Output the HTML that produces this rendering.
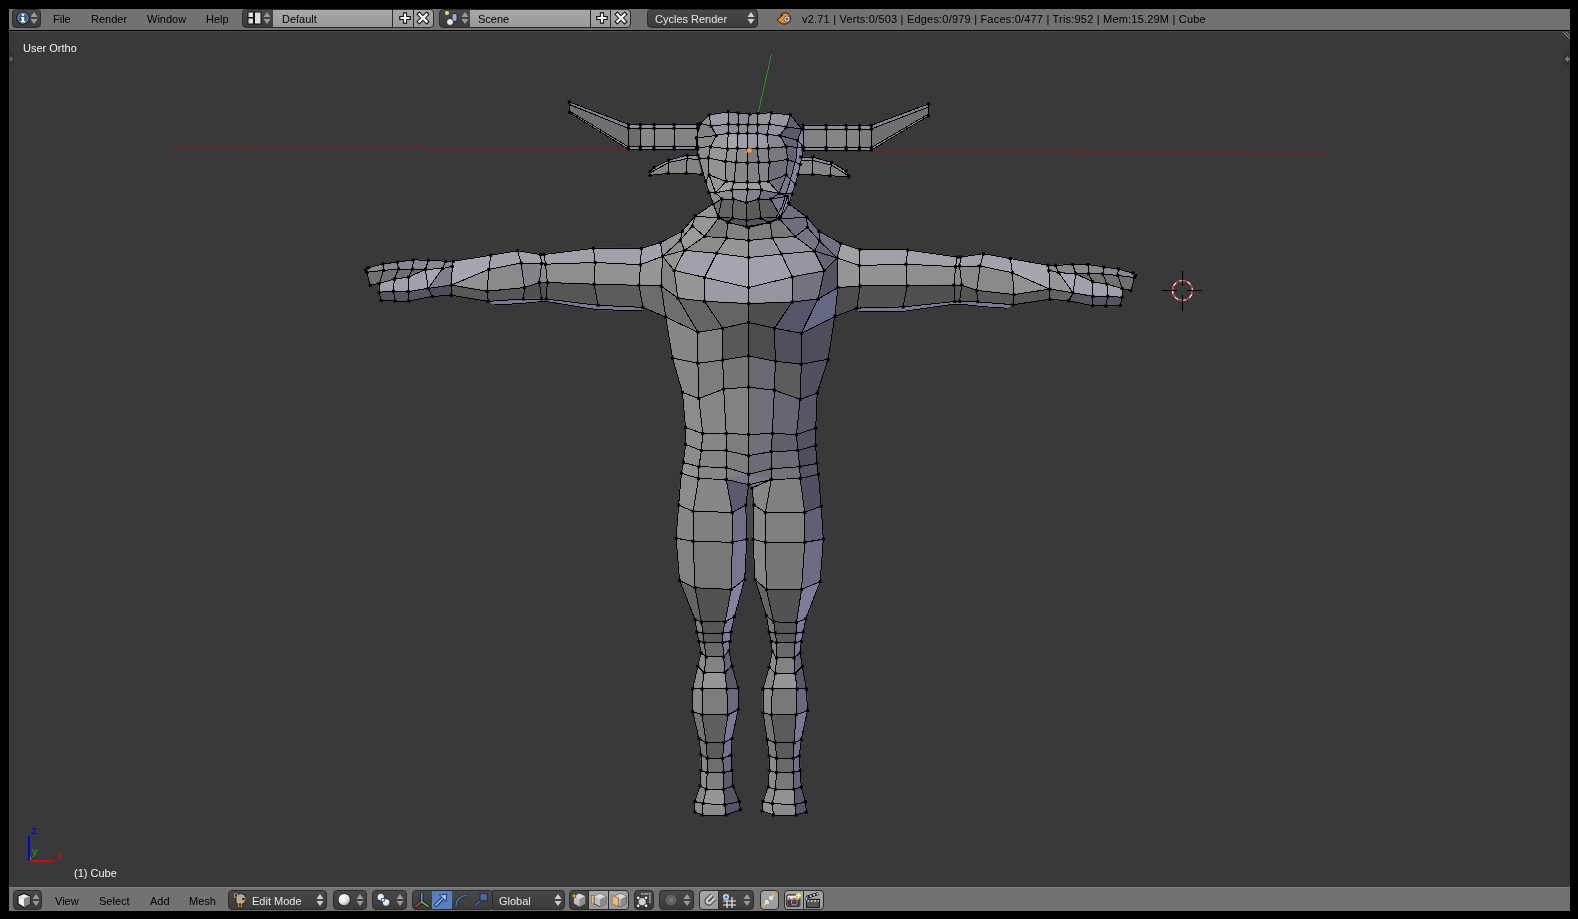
<!DOCTYPE html><html><head><meta charset="utf-8"><style>html,body{margin:0;padding:0;background:#000;width:1578px;height:919px;overflow:hidden;}body{font-family:'Liberation Sans',sans-serif;position:relative;}</style></head><body>
<div style="position:absolute;left:9px;top:31px;width:1561px;height:856px;background:#393939;"></div>
<div style="position:absolute;left:9px;top:31px;width:1561px;height:1px;background:#4a4a4a;"></div>
<svg style="position:absolute;left:0;top:0" width="1578" height="919">
<line x1="173" y1="146.5" x2="1326" y2="153.5" stroke="#871919" stroke-width="1" shape-rendering="crispEdges"/>
<line x1="758.3" y1="112.5" x2="771.5" y2="54.3" stroke="#1e961e" stroke-width="1" shape-rendering="crispEdges"/>
<path d="M569.3 101.9 L628.5 124.4 L628.5 128.3 L569.3 105.0 Z" fill="rgb(130,130,147)" stroke="rgb(130,130,147)" stroke-width="0.6"/>
<path d="M569.3 105.0 L628.5 128.3 L628.5 146.9 L569.3 112.6 Z" fill="rgb(112,112,112)" stroke="rgb(112,112,112)" stroke-width="0.6"/>
<path d="M569.3 111.0 L628.5 146.9 L628.5 149.3 L569.3 112.6 Z" fill="rgb(140,140,157)" stroke="rgb(140,140,157)" stroke-width="0.6"/>
<path d="M628.5 124.4 L640.3 124.4 L640.3 128.3 L628.5 128.3 Z" fill="rgb(142,142,159)" stroke="rgb(142,142,159)" stroke-width="0.6"/>
<path d="M628.5 128.3 L640.3 128.3 L640.3 146.9 L628.5 146.9 Z" fill="rgb(108,108,108)" stroke="rgb(108,108,108)" stroke-width="0.6"/>
<path d="M628.5 146.9 L640.3 146.9 L640.3 149.3 L628.5 149.3 Z" fill="rgb(138,138,155)" stroke="rgb(138,138,155)" stroke-width="0.6"/>
<path d="M640.3 124.4 L654.0 124.4 L654.0 128.3 L640.3 128.3 Z" fill="rgb(142,142,159)" stroke="rgb(142,142,159)" stroke-width="0.6"/>
<path d="M640.3 128.3 L654.0 128.3 L654.0 146.9 L640.3 146.9 Z" fill="rgb(136,136,136)" stroke="rgb(136,136,136)" stroke-width="0.6"/>
<path d="M640.3 146.9 L654.0 146.9 L654.0 149.3 L640.3 149.3 Z" fill="rgb(138,138,155)" stroke="rgb(138,138,155)" stroke-width="0.6"/>
<path d="M654.0 124.4 L674.1 124.4 L674.1 128.3 L654.0 128.3 Z" fill="rgb(142,142,159)" stroke="rgb(142,142,159)" stroke-width="0.6"/>
<path d="M654.0 128.3 L674.1 128.3 L674.1 146.9 L654.0 146.9 Z" fill="rgb(132,132,132)" stroke="rgb(132,132,132)" stroke-width="0.6"/>
<path d="M654.0 146.9 L674.1 146.9 L674.1 149.3 L654.0 149.3 Z" fill="rgb(138,138,155)" stroke="rgb(138,138,155)" stroke-width="0.6"/>
<path d="M674.1 124.4 L697.6 124.4 L697.6 128.3 L674.1 128.3 Z" fill="rgb(142,142,159)" stroke="rgb(142,142,159)" stroke-width="0.6"/>
<path d="M674.1 128.3 L697.6 128.3 L697.6 146.9 L674.1 146.9 Z" fill="rgb(132,132,132)" stroke="rgb(132,132,132)" stroke-width="0.6"/>
<path d="M674.1 146.9 L697.6 146.9 L697.6 149.3 L674.1 149.3 Z" fill="rgb(138,138,155)" stroke="rgb(138,138,155)" stroke-width="0.6"/>
<path d="M928.6 103.9 L871.4 125.2 L871.4 129.0 L928.6 107.0 Z" fill="rgb(130,130,147)" stroke="rgb(130,130,147)" stroke-width="0.6"/>
<path d="M928.6 107.0 L871.4 129.0 L871.4 147.5 L928.6 115.9 Z" fill="rgb(112,112,112)" stroke="rgb(112,112,112)" stroke-width="0.6"/>
<path d="M928.6 114.0 L871.4 147.5 L871.4 150.0 L928.6 115.9 Z" fill="rgb(140,140,157)" stroke="rgb(140,140,157)" stroke-width="0.6"/>
<path d="M803.0 125.2 L826.1 125.2 L826.1 129.0 L803.0 129.0 Z" fill="rgb(142,142,159)" stroke="rgb(142,142,159)" stroke-width="0.6"/>
<path d="M803.0 129.0 L826.1 129.0 L826.1 147.5 L803.0 147.5 Z" fill="rgb(130,130,130)" stroke="rgb(130,130,130)" stroke-width="0.6"/>
<path d="M803.0 147.5 L826.1 147.5 L826.1 150.0 L803.0 150.0 Z" fill="rgb(138,138,155)" stroke="rgb(138,138,155)" stroke-width="0.6"/>
<path d="M826.1 125.2 L846.1 125.2 L846.1 129.0 L826.1 129.0 Z" fill="rgb(142,142,159)" stroke="rgb(142,142,159)" stroke-width="0.6"/>
<path d="M826.1 129.0 L846.1 129.0 L846.1 147.5 L826.1 147.5 Z" fill="rgb(134,134,134)" stroke="rgb(134,134,134)" stroke-width="0.6"/>
<path d="M826.1 147.5 L846.1 147.5 L846.1 150.0 L826.1 150.0 Z" fill="rgb(138,138,155)" stroke="rgb(138,138,155)" stroke-width="0.6"/>
<path d="M846.1 125.2 L859.4 125.2 L859.4 129.0 L846.1 129.0 Z" fill="rgb(142,142,159)" stroke="rgb(142,142,159)" stroke-width="0.6"/>
<path d="M846.1 129.0 L859.4 129.0 L859.4 147.5 L846.1 147.5 Z" fill="rgb(132,132,132)" stroke="rgb(132,132,132)" stroke-width="0.6"/>
<path d="M846.1 147.5 L859.4 147.5 L859.4 150.0 L846.1 150.0 Z" fill="rgb(138,138,155)" stroke="rgb(138,138,155)" stroke-width="0.6"/>
<path d="M859.4 125.2 L871.4 125.2 L871.4 129.0 L859.4 129.0 Z" fill="rgb(142,142,159)" stroke="rgb(142,142,159)" stroke-width="0.6"/>
<path d="M859.4 129.0 L871.4 129.0 L871.4 147.5 L859.4 147.5 Z" fill="rgb(125,125,125)" stroke="rgb(125,125,125)" stroke-width="0.6"/>
<path d="M859.4 147.5 L871.4 147.5 L871.4 150.0 L859.4 150.0 Z" fill="rgb(138,138,155)" stroke="rgb(138,138,155)" stroke-width="0.6"/>
<path d="M650.1 171.4 L654.0 167.5 L668.7 160.1 L687.3 155.2 L698.0 155.2 L698.0 159.6 L698.0 159.6 L687.3 158.6 L668.7 162.6 L656.0 169.5 L650.1 173.0 Z" fill="rgb(142,142,159)" stroke="rgb(142,142,159)" stroke-width="0.6"/>
<path d="M650.1 173.0 L656.0 169.5 L668.7 162.6 L687.3 158.6 L698.0 159.6 L701.5 174.3 L686.3 173.3 L668.2 173.3 L650.1 175.3 Z" fill="rgb(132,132,132)" stroke="rgb(132,132,132)" stroke-width="0.6"/>
<path d="M848.8 175.7 L846.0 171.0 L831.5 162.4 L812.8 157.1 L800.8 157.1 L800.8 161.0 L812.8 160.5 L831.5 165.0 L844.0 173.0 L848.8 176.5 Z" fill="rgb(142,142,159)" stroke="rgb(142,142,159)" stroke-width="0.6"/>
<path d="M848.8 176.5 L844.0 173.0 L831.5 165.0 L812.8 160.5 L800.8 161.0 L798.0 174.4 L812.8 174.4 L830.1 175.7 L848.8 177.0 Z" fill="rgb(132,132,132)" stroke="rgb(132,132,132)" stroke-width="0.6"/>
<path d="M641.3 248.4 L660.4 242.6 L662.6 256.3 L640.6 264.7 Z" fill="rgb(162,162,170)" stroke="rgb(162,162,170)" stroke-width="0.6"/>
<path d="M860.0 249.5 L840.9 243.4 L837.1 257.9 L859.2 265.5 Z" fill="rgb(160,160,168)" stroke="rgb(160,160,168)" stroke-width="0.6"/>
<path d="M640.6 264.7 L662.6 256.3 L661.1 286.0 L639.0 285.3 Z" fill="rgb(150,150,150)" stroke="rgb(150,150,150)" stroke-width="0.6"/>
<path d="M859.2 265.5 L837.1 257.9 L837.9 287.6 L860.0 286.0 Z" fill="rgb(150,150,150)" stroke="rgb(150,150,150)" stroke-width="0.6"/>
<path d="M639.0 285.3 L661.1 286.0 L665.7 317.0 L642.9 307.4 Z" fill="rgb(108,108,108)" stroke="rgb(108,108,108)" stroke-width="0.6"/>
<path d="M860.0 286.0 L837.9 287.6 L834.8 316.5 L856.9 308.1 Z" fill="rgb(76,76,76)" stroke="rgb(76,76,76)" stroke-width="0.6"/>
<path d="M660.4 242.6 L682.4 231.2 L680.2 240.4 L662.6 256.3 Z" fill="rgb(146,146,154)" stroke="rgb(146,146,154)" stroke-width="0.6"/>
<path d="M840.9 243.4 L818.9 231.2 L819.6 241.1 L837.1 257.9 Z" fill="rgb(112,112,129)" stroke="rgb(112,112,129)" stroke-width="0.6"/>
<path d="M662.6 256.3 L680.2 240.4 L684.7 250.3 Z" fill="rgb(140,140,140)" stroke="rgb(140,140,140)" stroke-width="0.6"/>
<path d="M837.1 257.9 L819.6 241.1 L814.3 251.0 Z" fill="rgb(100,100,117)" stroke="rgb(100,100,117)" stroke-width="0.6"/>
<path d="M662.6 256.3 L684.7 250.3 L674.1 270.4 Z" fill="rgb(148,148,148)" stroke="rgb(148,148,148)" stroke-width="0.6"/>
<path d="M837.1 257.9 L814.3 251.0 L824.2 270.8 Z" fill="rgb(100,100,117)" stroke="rgb(100,100,117)" stroke-width="0.6"/>
<path d="M662.6 256.3 L674.1 270.4 L677.9 298.2 L661.1 286.0 Z" fill="rgb(130,130,130)" stroke="rgb(130,130,130)" stroke-width="0.6"/>
<path d="M837.1 257.9 L824.2 270.8 L818.1 299.0 L837.9 287.6 Z" fill="rgb(82,82,94)" stroke="rgb(82,82,94)" stroke-width="0.6"/>
<path d="M661.1 286.0 L677.9 298.2 L697.9 332.3 L665.7 317.0 Z" fill="rgb(110,110,110)" stroke="rgb(110,110,110)" stroke-width="0.6"/>
<path d="M837.9 287.6 L818.1 299.0 L801.3 333.2 L834.8 316.5 Z" fill="rgb(100,104,130)" stroke="rgb(100,104,130)" stroke-width="0.6"/>
<path d="M684.7 250.3 L716.7 253.3 L704.5 277.4 L674.1 270.4 Z" fill="rgb(160,160,168)" stroke="rgb(160,160,168)" stroke-width="0.6"/>
<path d="M814.3 251.0 L781.5 254.1 L792.2 276.9 L824.2 270.8 Z" fill="rgb(150,150,158)" stroke="rgb(150,150,158)" stroke-width="0.6"/>
<path d="M716.7 253.3 L748.7 257.6 L748.7 287.6 L704.5 277.4 Z" fill="rgb(165,165,173)" stroke="rgb(165,165,173)" stroke-width="0.6"/>
<path d="M781.5 254.1 L748.7 257.6 L748.7 287.6 L792.2 276.9 Z" fill="rgb(160,160,168)" stroke="rgb(160,160,168)" stroke-width="0.6"/>
<path d="M674.1 270.4 L704.5 277.4 L704.5 301.3 L677.9 298.2 Z" fill="rgb(150,150,150)" stroke="rgb(150,150,150)" stroke-width="0.6"/>
<path d="M824.2 270.8 L792.2 276.9 L792.2 302.0 L818.1 299.0 Z" fill="rgb(115,115,123)" stroke="rgb(115,115,123)" stroke-width="0.6"/>
<path d="M704.5 277.4 L748.7 287.6 L748.7 303.6 L704.5 301.3 Z" fill="rgb(155,155,163)" stroke="rgb(155,155,163)" stroke-width="0.6"/>
<path d="M792.2 276.9 L748.7 287.6 L748.7 303.6 L792.2 302.0 Z" fill="rgb(150,150,158)" stroke="rgb(150,150,158)" stroke-width="0.6"/>
<path d="M677.9 298.2 L704.5 301.3 L722.7 328.2 L697.9 332.3 Z" fill="rgb(100,100,100)" stroke="rgb(100,100,100)" stroke-width="0.6"/>
<path d="M818.1 299.0 L792.2 302.0 L774.4 328.2 L801.3 333.2 Z" fill="rgb(85,85,105)" stroke="rgb(85,85,105)" stroke-width="0.6"/>
<path d="M704.5 301.3 L748.7 303.6 L748.6 322.4 L722.7 328.2 Z" fill="rgb(100,100,100)" stroke="rgb(100,100,100)" stroke-width="0.6"/>
<path d="M792.2 302.0 L748.7 303.6 L748.6 322.4 L774.4 328.2 Z" fill="rgb(78,78,78)" stroke="rgb(78,78,78)" stroke-width="0.6"/>
<path d="M682.4 231.2 L695.0 216.1 L692.3 225.9 L680.2 240.4 Z" fill="rgb(155,155,155)" stroke="rgb(155,155,155)" stroke-width="0.6"/>
<path d="M818.9 231.2 L806.7 217.1 L807.4 227.4 L819.6 241.1 Z" fill="rgb(112,112,129)" stroke="rgb(112,112,129)" stroke-width="0.6"/>
<path d="M692.3 225.9 L704.5 236.5 L684.7 250.3 L680.2 240.4 Z" fill="rgb(155,155,155)" stroke="rgb(155,155,155)" stroke-width="0.6"/>
<path d="M807.4 227.4 L795.3 236.5 L814.3 251.0 L819.6 241.1 Z" fill="rgb(116,116,133)" stroke="rgb(116,116,133)" stroke-width="0.6"/>
<path d="M704.5 236.5 L726.6 238.1 L716.7 253.3 L684.7 250.3 Z" fill="rgb(140,140,140)" stroke="rgb(140,140,140)" stroke-width="0.6"/>
<path d="M795.3 236.5 L772.4 238.1 L781.5 254.1 L814.3 251.0 Z" fill="rgb(145,145,153)" stroke="rgb(145,145,153)" stroke-width="0.6"/>
<path d="M726.6 238.1 L748.7 240.4 L748.7 257.6 L716.7 253.3 Z" fill="rgb(150,150,150)" stroke="rgb(150,150,150)" stroke-width="0.6"/>
<path d="M772.4 238.1 L748.7 240.4 L748.7 257.6 L781.5 254.1 Z" fill="rgb(148,148,156)" stroke="rgb(148,148,156)" stroke-width="0.6"/>
<path d="M692.3 225.9 L695.0 216.1 L718.5 218.0 L704.5 236.5 Z" fill="rgb(150,150,150)" stroke="rgb(150,150,150)" stroke-width="0.6"/>
<path d="M807.4 227.4 L806.7 217.1 L779.6 219.0 L795.3 236.5 Z" fill="rgb(110,110,127)" stroke="rgb(110,110,127)" stroke-width="0.6"/>
<path d="M718.5 218.0 L727.4 222.1 L726.6 238.1 L704.5 236.5 Z" fill="rgb(120,120,120)" stroke="rgb(120,120,120)" stroke-width="0.6"/>
<path d="M779.6 219.0 L770.0 222.5 L772.4 238.1 L795.3 236.5 Z" fill="rgb(120,120,120)" stroke="rgb(120,120,120)" stroke-width="0.6"/>
<path d="M727.4 222.1 L748.7 227.4 L748.7 240.4 L726.6 238.1 Z" fill="rgb(130,130,130)" stroke="rgb(130,130,130)" stroke-width="0.6"/>
<path d="M770.0 222.5 L748.7 227.4 L748.7 240.4 L772.4 238.1 Z" fill="rgb(125,125,125)" stroke="rgb(125,125,125)" stroke-width="0.6"/>
<path d="M695.0 216.1 L713.0 203.8 L718.5 218.0 Z" fill="rgb(148,148,148)" stroke="rgb(148,148,148)" stroke-width="0.6"/>
<path d="M806.7 217.1 L786.7 202.3 L779.6 219.0 Z" fill="rgb(112,112,129)" stroke="rgb(112,112,129)" stroke-width="0.6"/>
<path d="M665.7 317.0 L697.9 332.3 L697.9 363.3 L672.5 358.0 Z" fill="rgb(135,135,135)" stroke="rgb(135,135,135)" stroke-width="0.6"/>
<path d="M697.9 332.3 L722.7 328.2 L722.7 360.0 L697.9 363.3 Z" fill="rgb(128,128,128)" stroke="rgb(128,128,128)" stroke-width="0.6"/>
<path d="M722.7 328.2 L748.6 322.4 L748.6 355.9 L722.7 360.0 Z" fill="rgb(88,88,88)" stroke="rgb(88,88,88)" stroke-width="0.6"/>
<path d="M748.6 322.4 L774.4 328.2 L775.4 361.3 L748.6 355.9 Z" fill="rgb(76,76,76)" stroke="rgb(76,76,76)" stroke-width="0.6"/>
<path d="M774.4 328.2 L801.3 333.2 L801.3 364.2 L775.4 361.3 Z" fill="rgb(80,80,92)" stroke="rgb(80,80,92)" stroke-width="0.6"/>
<path d="M801.3 333.2 L834.8 316.5 L828.1 359.2 L801.3 364.2 Z" fill="rgb(78,78,90)" stroke="rgb(78,78,90)" stroke-width="0.6"/>
<path d="M672.5 358.0 L697.9 363.3 L698.9 398.5 L682.4 392.3 Z" fill="rgb(135,135,135)" stroke="rgb(135,135,135)" stroke-width="0.6"/>
<path d="M697.9 363.3 L722.7 360.0 L723.7 389.0 L698.9 398.5 Z" fill="rgb(125,125,125)" stroke="rgb(125,125,125)" stroke-width="0.6"/>
<path d="M722.7 360.0 L748.6 355.9 L748.6 387.1 L723.7 389.0 Z" fill="rgb(118,118,118)" stroke="rgb(118,118,118)" stroke-width="0.6"/>
<path d="M748.6 355.9 L775.4 361.3 L774.4 390.2 L748.6 387.1 Z" fill="rgb(105,105,113)" stroke="rgb(105,105,113)" stroke-width="0.6"/>
<path d="M775.4 361.3 L801.3 364.2 L800.2 399.3 L774.4 390.2 Z" fill="rgb(92,92,92)" stroke="rgb(92,92,92)" stroke-width="0.6"/>
<path d="M801.3 364.2 L828.1 359.2 L817.2 393.1 L800.2 399.3 Z" fill="rgb(80,80,97)" stroke="rgb(80,80,97)" stroke-width="0.6"/>
<path d="M682.4 392.3 L698.9 398.5 L702.7 433.6 L685.5 427.4 Z" fill="rgb(140,140,140)" stroke="rgb(140,140,140)" stroke-width="0.6"/>
<path d="M698.9 398.5 L723.7 389.0 L726.2 433.6 L702.7 433.6 Z" fill="rgb(135,135,135)" stroke="rgb(135,135,135)" stroke-width="0.6"/>
<path d="M723.7 389.0 L748.6 387.1 L748.6 434.4 L726.2 433.6 Z" fill="rgb(130,130,130)" stroke="rgb(130,130,130)" stroke-width="0.6"/>
<path d="M748.6 387.1 L774.4 390.2 L772.3 433.6 L748.6 434.4 Z" fill="rgb(112,112,120)" stroke="rgb(112,112,120)" stroke-width="0.6"/>
<path d="M774.4 390.2 L800.2 399.3 L796.5 434.4 L772.3 433.6 Z" fill="rgb(102,102,110)" stroke="rgb(102,102,110)" stroke-width="0.6"/>
<path d="M800.2 399.3 L817.2 393.1 L815.7 428.2 L796.5 434.4 Z" fill="rgb(86,86,103)" stroke="rgb(86,86,103)" stroke-width="0.6"/>
<path d="M685.5 427.4 L702.7 433.6 L701.4 450.6 L685.5 444.4 Z" fill="rgb(140,140,140)" stroke="rgb(140,140,140)" stroke-width="0.6"/>
<path d="M702.7 433.6 L726.2 433.6 L726.2 450.6 L701.4 450.6 Z" fill="rgb(135,135,135)" stroke="rgb(135,135,135)" stroke-width="0.6"/>
<path d="M726.2 433.6 L748.6 434.4 L748.6 455.7 L726.2 450.6 Z" fill="rgb(125,125,125)" stroke="rgb(125,125,125)" stroke-width="0.6"/>
<path d="M748.6 434.4 L772.3 433.6 L771.3 451.6 L748.6 455.7 Z" fill="rgb(112,112,120)" stroke="rgb(112,112,120)" stroke-width="0.6"/>
<path d="M772.3 433.6 L796.5 434.4 L797.8 450.6 L771.3 451.6 Z" fill="rgb(95,95,103)" stroke="rgb(95,95,103)" stroke-width="0.6"/>
<path d="M796.5 434.4 L815.7 428.2 L815.7 445.4 L797.8 450.6 Z" fill="rgb(82,82,99)" stroke="rgb(82,82,99)" stroke-width="0.6"/>
<path d="M685.5 444.4 L701.4 450.6 L698.9 466.7 L683.4 462.6 Z" fill="rgb(140,140,140)" stroke="rgb(140,140,140)" stroke-width="0.6"/>
<path d="M701.4 450.6 L726.2 450.6 L726.2 467.5 L698.9 466.7 Z" fill="rgb(132,132,132)" stroke="rgb(132,132,132)" stroke-width="0.6"/>
<path d="M726.2 450.6 L748.6 455.7 L748.6 474.3 L726.2 467.5 Z" fill="rgb(125,125,125)" stroke="rgb(125,125,125)" stroke-width="0.6"/>
<path d="M748.6 455.7 L771.3 451.6 L771.3 468.8 L748.6 474.3 Z" fill="rgb(108,108,116)" stroke="rgb(108,108,116)" stroke-width="0.6"/>
<path d="M771.3 451.6 L797.8 450.6 L799.8 466.7 L771.3 468.8 Z" fill="rgb(108,108,116)" stroke="rgb(108,108,116)" stroke-width="0.6"/>
<path d="M797.8 450.6 L815.7 445.4 L816.8 463.4 L799.8 466.7 Z" fill="rgb(78,78,95)" stroke="rgb(78,78,95)" stroke-width="0.6"/>
<path d="M683.4 462.6 L698.9 466.7 L698.5 478.5 L681.4 473.3 Z" fill="rgb(145,145,145)" stroke="rgb(145,145,145)" stroke-width="0.6"/>
<path d="M698.9 466.7 L726.2 467.5 L726.2 479.5 L698.5 478.5 Z" fill="rgb(135,135,135)" stroke="rgb(135,135,135)" stroke-width="0.6"/>
<path d="M726.2 467.5 L748.6 474.3 L748.6 484.7 L726.2 479.5 Z" fill="rgb(128,128,128)" stroke="rgb(128,128,128)" stroke-width="0.6"/>
<path d="M748.6 474.3 L771.3 468.8 L771.3 479.5 L748.6 484.7 Z" fill="rgb(112,112,120)" stroke="rgb(112,112,120)" stroke-width="0.6"/>
<path d="M771.3 468.8 L799.8 466.7 L800.2 478.5 L771.3 479.5 Z" fill="rgb(115,115,123)" stroke="rgb(115,115,123)" stroke-width="0.6"/>
<path d="M799.8 466.7 L816.8 463.4 L818.4 474.3 L800.2 478.5 Z" fill="rgb(85,85,102)" stroke="rgb(85,85,102)" stroke-width="0.6"/>
<path d="M745.8 505.1 L748.6 484.7 L752.0 488.0 L754.0 505.1 L753.0 539.2 L746.8 539.2 Z" fill="rgb(72,72,72)" stroke="rgb(72,72,72)" stroke-width="0.6"/>
<path d="M726.2 479.5 L748.6 484.7 L752.0 488.0 L771.3 479.5 L748.6 474.3 Z" fill="rgb(118,118,135)" stroke="rgb(118,118,135)" stroke-width="0.6"/>
<path d="M681.4 473.3 L698.5 478.5 L693.1 511.3 L678.6 505.1 Z" fill="rgb(140,140,140)" stroke="rgb(140,140,140)" stroke-width="0.6"/>
<path d="M698.5 478.5 L726.2 479.5 L732.3 512.4 L693.1 511.3 Z" fill="rgb(135,135,135)" stroke="rgb(135,135,135)" stroke-width="0.6"/>
<path d="M726.2 479.5 L748.6 484.7 L745.8 505.1 L732.3 512.4 Z" fill="rgb(90,90,108)" stroke="rgb(90,90,108)" stroke-width="0.6"/>
<path d="M678.6 505.1 L693.1 511.3 L693.1 541.3 L676.1 538.2 Z" fill="rgb(135,135,135)" stroke="rgb(135,135,135)" stroke-width="0.6"/>
<path d="M693.1 511.3 L732.3 512.4 L732.3 542.3 L693.1 541.3 Z" fill="rgb(128,128,128)" stroke="rgb(128,128,128)" stroke-width="0.6"/>
<path d="M732.3 512.4 L745.8 505.1 L746.8 539.2 L732.3 542.3 Z" fill="rgb(110,110,135)" stroke="rgb(110,110,135)" stroke-width="0.6"/>
<path d="M676.1 538.2 L693.1 541.3 L695.1 587.8 L679.6 580.6 Z" fill="rgb(130,130,130)" stroke="rgb(130,130,130)" stroke-width="0.6"/>
<path d="M693.1 541.3 L732.3 542.3 L731.3 589.4 L695.1 587.8 Z" fill="rgb(120,120,120)" stroke="rgb(120,120,120)" stroke-width="0.6"/>
<path d="M732.3 542.3 L746.8 539.2 L744.7 579.5 L731.3 589.4 Z" fill="rgb(118,118,145)" stroke="rgb(118,118,145)" stroke-width="0.6"/>
<path d="M679.6 580.6 L695.1 587.8 L701.3 621.9 L695.1 619.8 Z" fill="rgb(100,100,100)" stroke="rgb(100,100,100)" stroke-width="0.6"/>
<path d="M695.1 587.8 L731.3 589.4 L725.1 621.9 L701.3 621.9 Z" fill="rgb(82,82,82)" stroke="rgb(82,82,82)" stroke-width="0.6"/>
<path d="M731.3 589.4 L744.7 579.5 L734.4 616.7 L725.1 621.9 Z" fill="rgb(130,130,160)" stroke="rgb(130,130,160)" stroke-width="0.6"/>
<path d="M695.1 619.8 L701.3 621.9 L703.1 633.1 L696.9 632.1 Z" fill="rgb(125,125,125)" stroke="rgb(125,125,125)" stroke-width="0.6"/>
<path d="M701.3 621.9 L725.1 621.9 L722.7 633.1 L703.1 633.1 Z" fill="rgb(85,85,85)" stroke="rgb(85,85,85)" stroke-width="0.6"/>
<path d="M725.1 621.9 L734.4 616.7 L731.0 632.1 L722.7 633.1 Z" fill="rgb(125,125,160)" stroke="rgb(125,125,160)" stroke-width="0.6"/>
<path d="M696.9 632.1 L703.1 633.1 L704.1 642.4 L698.9 641.4 Z" fill="rgb(110,110,110)" stroke="rgb(110,110,110)" stroke-width="0.6"/>
<path d="M703.1 633.1 L722.7 633.1 L722.7 642.4 L704.1 642.4 Z" fill="rgb(90,90,90)" stroke="rgb(90,90,90)" stroke-width="0.6"/>
<path d="M722.7 633.1 L731.0 632.1 L730.0 641.4 L722.7 642.4 Z" fill="rgb(125,125,155)" stroke="rgb(125,125,155)" stroke-width="0.6"/>
<path d="M698.9 641.4 L704.1 642.4 L706.2 656.9 L701.0 652.7 Z" fill="rgb(120,120,120)" stroke="rgb(120,120,120)" stroke-width="0.6"/>
<path d="M704.1 642.4 L722.7 642.4 L723.7 656.9 L706.2 656.9 Z" fill="rgb(105,105,105)" stroke="rgb(105,105,105)" stroke-width="0.6"/>
<path d="M722.7 642.4 L730.0 641.4 L728.9 650.7 L723.7 656.9 Z" fill="rgb(120,120,150)" stroke="rgb(120,120,150)" stroke-width="0.6"/>
<path d="M701.0 652.7 L706.2 656.9 L704.1 672.4 L697.9 666.2 Z" fill="rgb(140,140,140)" stroke="rgb(140,140,140)" stroke-width="0.6"/>
<path d="M706.2 656.9 L723.7 656.9 L724.8 672.4 L704.1 672.4 Z" fill="rgb(130,130,130)" stroke="rgb(130,130,130)" stroke-width="0.6"/>
<path d="M723.7 656.9 L728.9 650.7 L732.0 666.2 L724.8 672.4 Z" fill="rgb(100,100,120)" stroke="rgb(100,100,120)" stroke-width="0.6"/>
<path d="M697.9 666.2 L704.1 672.4 L702.0 688.9 L692.7 688.9 Z" fill="rgb(140,140,140)" stroke="rgb(140,140,140)" stroke-width="0.6"/>
<path d="M704.1 672.4 L724.8 672.4 L726.8 688.9 L702.0 688.9 Z" fill="rgb(150,150,150)" stroke="rgb(150,150,150)" stroke-width="0.6"/>
<path d="M724.8 672.4 L732.0 666.2 L738.2 687.9 L726.8 688.9 Z" fill="rgb(88,88,105)" stroke="rgb(88,88,105)" stroke-width="0.6"/>
<path d="M692.7 688.9 L702.0 688.9 L702.0 714.8 L692.7 711.7 Z" fill="rgb(135,135,135)" stroke="rgb(135,135,135)" stroke-width="0.6"/>
<path d="M702.0 688.9 L726.8 688.9 L727.9 714.8 L702.0 714.8 Z" fill="rgb(125,125,125)" stroke="rgb(125,125,125)" stroke-width="0.6"/>
<path d="M726.8 688.9 L738.2 687.9 L738.2 709.6 L727.9 714.8 Z" fill="rgb(105,105,128)" stroke="rgb(105,105,128)" stroke-width="0.6"/>
<path d="M692.7 711.7 L702.0 714.8 L706.2 742.7 L698.9 738.5 Z" fill="rgb(115,115,115)" stroke="rgb(115,115,115)" stroke-width="0.6"/>
<path d="M702.0 714.8 L727.9 714.8 L723.7 742.7 L706.2 742.7 Z" fill="rgb(95,95,95)" stroke="rgb(95,95,95)" stroke-width="0.6"/>
<path d="M727.9 714.8 L738.2 709.6 L732.0 738.5 L723.7 742.7 Z" fill="rgb(120,120,150)" stroke="rgb(120,120,150)" stroke-width="0.6"/>
<path d="M698.9 738.5 L706.2 742.7 L707.2 758.2 L701.0 755.1 Z" fill="rgb(120,120,120)" stroke="rgb(120,120,120)" stroke-width="0.6"/>
<path d="M706.2 742.7 L723.7 742.7 L722.7 758.2 L707.2 758.2 Z" fill="rgb(90,90,90)" stroke="rgb(90,90,90)" stroke-width="0.6"/>
<path d="M723.7 742.7 L732.0 738.5 L731.0 755.1 L722.7 758.2 Z" fill="rgb(115,115,145)" stroke="rgb(115,115,145)" stroke-width="0.6"/>
<path d="M701.0 755.1 L707.2 758.2 L707.2 772.6 L701.0 770.6 Z" fill="rgb(135,135,135)" stroke="rgb(135,135,135)" stroke-width="0.6"/>
<path d="M707.2 758.2 L722.7 758.2 L723.7 772.6 L707.2 772.6 Z" fill="rgb(110,110,110)" stroke="rgb(110,110,110)" stroke-width="0.6"/>
<path d="M722.7 758.2 L731.0 755.1 L732.0 770.6 L723.7 772.6 Z" fill="rgb(105,105,128)" stroke="rgb(105,105,128)" stroke-width="0.6"/>
<path d="M701.0 770.6 L707.2 772.6 L706.2 789.2 L700.0 786.1 Z" fill="rgb(140,140,140)" stroke="rgb(140,140,140)" stroke-width="0.6"/>
<path d="M707.2 772.6 L723.7 772.6 L723.7 789.2 L706.2 789.2 Z" fill="rgb(128,128,128)" stroke="rgb(128,128,128)" stroke-width="0.6"/>
<path d="M723.7 772.6 L732.0 770.6 L733.0 786.1 L723.7 789.2 Z" fill="rgb(92,92,110)" stroke="rgb(92,92,110)" stroke-width="0.6"/>
<path d="M700.0 786.1 L706.2 789.2 L703.1 803.6 L694.8 801.6 Z" fill="rgb(135,135,135)" stroke="rgb(135,135,135)" stroke-width="0.6"/>
<path d="M706.2 789.2 L723.7 789.2 L724.8 804.7 L703.1 803.6 Z" fill="rgb(150,150,150)" stroke="rgb(150,150,150)" stroke-width="0.6"/>
<path d="M723.7 789.2 L733.0 786.1 L739.3 801.6 L724.8 804.7 Z" fill="rgb(85,85,102)" stroke="rgb(85,85,102)" stroke-width="0.6"/>
<path d="M694.8 801.6 L703.1 803.6 L702.0 815.0 L694.8 811.9 Z" fill="rgb(140,140,140)" stroke="rgb(140,140,140)" stroke-width="0.6"/>
<path d="M703.1 803.6 L724.8 804.7 L725.8 815.0 L702.0 815.0 Z" fill="rgb(140,140,140)" stroke="rgb(140,140,140)" stroke-width="0.6"/>
<path d="M724.8 804.7 L739.3 801.6 L740.3 809.8 L725.8 815.0 Z" fill="rgb(85,85,105)" stroke="rgb(85,85,105)" stroke-width="0.6"/>
<path d="M818.4 474.3 L800.2 478.5 L804.7 512.4 L821.2 506.2 Z" fill="rgb(80,80,98)" stroke="rgb(80,80,98)" stroke-width="0.6"/>
<path d="M800.2 478.5 L771.3 479.5 L765.4 512.4 L804.7 512.4 Z" fill="rgb(128,128,128)" stroke="rgb(128,128,128)" stroke-width="0.6"/>
<path d="M771.3 479.5 L752.0 488.0 L754.0 505.1 L765.4 512.4 Z" fill="rgb(135,135,135)" stroke="rgb(135,135,135)" stroke-width="0.6"/>
<path d="M821.2 506.2 L804.7 512.4 L804.7 542.3 L823.3 539.2 Z" fill="rgb(95,95,118)" stroke="rgb(95,95,118)" stroke-width="0.6"/>
<path d="M804.7 512.4 L765.4 512.4 L765.4 542.3 L804.7 542.3 Z" fill="rgb(128,128,128)" stroke="rgb(128,128,128)" stroke-width="0.6"/>
<path d="M765.4 512.4 L754.0 505.1 L753.0 539.2 L765.4 542.3 Z" fill="rgb(135,135,135)" stroke="rgb(135,135,135)" stroke-width="0.6"/>
<path d="M823.3 539.2 L804.7 542.3 L801.6 589.4 L820.2 581.6 Z" fill="rgb(108,108,130)" stroke="rgb(108,108,130)" stroke-width="0.6"/>
<path d="M804.7 542.3 L765.4 542.3 L766.4 589.4 L801.6 589.4 Z" fill="rgb(118,118,118)" stroke="rgb(118,118,118)" stroke-width="0.6"/>
<path d="M765.4 542.3 L753.0 539.2 L755.1 579.5 L766.4 589.4 Z" fill="rgb(135,135,135)" stroke="rgb(135,135,135)" stroke-width="0.6"/>
<path d="M820.2 581.6 L801.6 589.4 L796.4 622.5 L805.7 618.8 Z" fill="rgb(125,125,155)" stroke="rgb(125,125,155)" stroke-width="0.6"/>
<path d="M801.6 589.4 L766.4 589.4 L773.7 621.9 L796.4 622.5 Z" fill="rgb(82,82,82)" stroke="rgb(82,82,82)" stroke-width="0.6"/>
<path d="M766.4 589.4 L755.1 579.5 L766.4 615.7 L773.7 621.9 Z" fill="rgb(100,100,100)" stroke="rgb(100,100,100)" stroke-width="0.6"/>
<path d="M805.7 618.8 L796.4 622.5 L796.1 633.1 L803.3 632.1 Z" fill="rgb(120,120,155)" stroke="rgb(120,120,155)" stroke-width="0.6"/>
<path d="M796.4 622.5 L773.7 621.9 L775.4 633.1 L796.1 633.1 Z" fill="rgb(85,85,85)" stroke="rgb(85,85,85)" stroke-width="0.6"/>
<path d="M773.7 621.9 L766.4 615.7 L769.2 632.1 L775.4 633.1 Z" fill="rgb(120,120,120)" stroke="rgb(120,120,120)" stroke-width="0.6"/>
<path d="M803.3 632.1 L796.1 633.1 L795.1 642.4 L801.3 641.4 Z" fill="rgb(125,125,155)" stroke="rgb(125,125,155)" stroke-width="0.6"/>
<path d="M796.1 633.1 L775.4 633.1 L776.5 642.4 L795.1 642.4 Z" fill="rgb(90,90,90)" stroke="rgb(90,90,90)" stroke-width="0.6"/>
<path d="M775.4 633.1 L769.2 632.1 L771.3 641.4 L776.5 642.4 Z" fill="rgb(115,115,115)" stroke="rgb(115,115,115)" stroke-width="0.6"/>
<path d="M801.3 641.4 L795.1 642.4 L794.0 657.9 L800.2 652.7 Z" fill="rgb(120,120,150)" stroke="rgb(120,120,150)" stroke-width="0.6"/>
<path d="M795.1 642.4 L776.5 642.4 L776.5 657.9 L794.0 657.9 Z" fill="rgb(105,105,105)" stroke="rgb(105,105,105)" stroke-width="0.6"/>
<path d="M776.5 642.4 L771.3 641.4 L772.3 651.7 L776.5 657.9 Z" fill="rgb(130,130,130)" stroke="rgb(130,130,130)" stroke-width="0.6"/>
<path d="M800.2 652.7 L794.0 657.9 L795.1 673.4 L802.3 666.2 Z" fill="rgb(100,100,120)" stroke="rgb(100,100,120)" stroke-width="0.6"/>
<path d="M794.0 657.9 L776.5 657.9 L775.4 673.4 L795.1 673.4 Z" fill="rgb(130,130,130)" stroke="rgb(130,130,130)" stroke-width="0.6"/>
<path d="M776.5 657.9 L772.3 651.7 L769.2 667.2 L775.4 673.4 Z" fill="rgb(140,140,140)" stroke="rgb(140,140,140)" stroke-width="0.6"/>
<path d="M802.3 666.2 L795.1 673.4 L797.1 688.9 L806.4 688.9 Z" fill="rgb(88,88,105)" stroke="rgb(88,88,105)" stroke-width="0.6"/>
<path d="M795.1 673.4 L775.4 673.4 L772.3 688.9 L797.1 688.9 Z" fill="rgb(150,150,150)" stroke="rgb(150,150,150)" stroke-width="0.6"/>
<path d="M775.4 673.4 L769.2 667.2 L763.0 688.9 L772.3 688.9 Z" fill="rgb(135,135,135)" stroke="rgb(135,135,135)" stroke-width="0.6"/>
<path d="M806.4 688.9 L797.1 688.9 L796.1 714.8 L807.5 710.6 Z" fill="rgb(105,105,128)" stroke="rgb(105,105,128)" stroke-width="0.6"/>
<path d="M797.1 688.9 L772.3 688.9 L771.3 714.8 L796.1 714.8 Z" fill="rgb(120,120,120)" stroke="rgb(120,120,120)" stroke-width="0.6"/>
<path d="M772.3 688.9 L763.0 688.9 L763.0 712.7 L771.3 714.8 Z" fill="rgb(140,140,140)" stroke="rgb(140,140,140)" stroke-width="0.6"/>
<path d="M807.5 710.6 L796.1 714.8 L794.0 742.7 L801.3 739.6 Z" fill="rgb(120,120,150)" stroke="rgb(120,120,150)" stroke-width="0.6"/>
<path d="M796.1 714.8 L771.3 714.8 L775.4 742.7 L794.0 742.7 Z" fill="rgb(90,90,90)" stroke="rgb(90,90,90)" stroke-width="0.6"/>
<path d="M771.3 714.8 L763.0 712.7 L767.2 739.6 L775.4 742.7 Z" fill="rgb(115,115,115)" stroke="rgb(115,115,115)" stroke-width="0.6"/>
<path d="M801.3 739.6 L794.0 742.7 L793.0 758.2 L799.2 756.1 Z" fill="rgb(115,115,145)" stroke="rgb(115,115,145)" stroke-width="0.6"/>
<path d="M794.0 742.7 L775.4 742.7 L776.5 758.2 L793.0 758.2 Z" fill="rgb(90,90,90)" stroke="rgb(90,90,90)" stroke-width="0.6"/>
<path d="M775.4 742.7 L767.2 739.6 L769.2 756.1 L776.5 758.2 Z" fill="rgb(125,125,125)" stroke="rgb(125,125,125)" stroke-width="0.6"/>
<path d="M799.2 756.1 L793.0 758.2 L793.0 772.6 L800.2 770.6 Z" fill="rgb(110,110,140)" stroke="rgb(110,110,140)" stroke-width="0.6"/>
<path d="M793.0 758.2 L776.5 758.2 L776.5 772.6 L793.0 772.6 Z" fill="rgb(105,105,105)" stroke="rgb(105,105,105)" stroke-width="0.6"/>
<path d="M776.5 758.2 L769.2 756.1 L769.2 770.6 L776.5 772.6 Z" fill="rgb(140,140,140)" stroke="rgb(140,140,140)" stroke-width="0.6"/>
<path d="M800.2 770.6 L793.0 772.6 L794.0 789.2 L801.3 787.1 Z" fill="rgb(100,100,125)" stroke="rgb(100,100,125)" stroke-width="0.6"/>
<path d="M793.0 772.6 L776.5 772.6 L775.4 789.2 L794.0 789.2 Z" fill="rgb(120,120,120)" stroke="rgb(120,120,120)" stroke-width="0.6"/>
<path d="M776.5 772.6 L769.2 770.6 L768.2 787.1 L775.4 789.2 Z" fill="rgb(140,140,140)" stroke="rgb(140,140,140)" stroke-width="0.6"/>
<path d="M801.3 787.1 L794.0 789.2 L795.1 804.7 L805.4 801.6 Z" fill="rgb(85,85,102)" stroke="rgb(85,85,102)" stroke-width="0.6"/>
<path d="M794.0 789.2 L775.4 789.2 L772.3 803.6 L795.1 804.7 Z" fill="rgb(145,145,145)" stroke="rgb(145,145,145)" stroke-width="0.6"/>
<path d="M775.4 789.2 L768.2 787.1 L763.0 801.6 L772.3 803.6 Z" fill="rgb(140,140,140)" stroke="rgb(140,140,140)" stroke-width="0.6"/>
<path d="M805.4 801.6 L795.1 804.7 L796.1 815.0 L806.4 811.9 Z" fill="rgb(85,85,105)" stroke="rgb(85,85,105)" stroke-width="0.6"/>
<path d="M795.1 804.7 L772.3 803.6 L773.4 815.0 L796.1 815.0 Z" fill="rgb(140,140,140)" stroke="rgb(140,140,140)" stroke-width="0.6"/>
<path d="M772.3 803.6 L763.0 801.6 L762.0 810.9 L773.4 815.0 Z" fill="rgb(145,145,145)" stroke="rgb(145,145,145)" stroke-width="0.6"/>
<path d="M641.3 248.4 L593.5 248.3 L595.2 262.5 L640.6 264.7 Z" fill="rgb(160,160,168)" stroke="rgb(160,160,168)" stroke-width="0.6"/>
<path d="M640.6 264.7 L595.2 262.5 L594.1 284.2 L639.0 285.3 Z" fill="rgb(146,146,146)" stroke="rgb(146,146,146)" stroke-width="0.6"/>
<path d="M639.0 285.3 L594.1 284.2 L598.1 305.3 L642.9 307.4 Z" fill="rgb(92,92,92)" stroke="rgb(92,92,92)" stroke-width="0.6"/>
<path d="M642.9 307.4 L598.1 305.3 L597.5 309.8 L642.0 310.4 Z" fill="rgb(118,122,148)" stroke="rgb(118,122,148)" stroke-width="0.6"/>
<path d="M593.5 248.3 L543.9 254.5 L545.6 264.2 L595.2 262.5 Z" fill="rgb(160,160,168)" stroke="rgb(160,160,168)" stroke-width="0.6"/>
<path d="M595.2 262.5 L545.6 264.2 L547.3 282.5 L594.1 284.2 Z" fill="rgb(142,142,142)" stroke="rgb(142,142,142)" stroke-width="0.6"/>
<path d="M594.1 284.2 L547.3 282.5 L546.2 299.0 L598.1 305.3 Z" fill="rgb(86,86,86)" stroke="rgb(86,86,86)" stroke-width="0.6"/>
<path d="M598.1 305.3 L546.2 299.0 L546.2 301.5 L597.5 309.8 Z" fill="rgb(118,122,148)" stroke="rgb(118,122,148)" stroke-width="0.6"/>
<path d="M543.9 254.5 L540.5 254.5 L541.6 263.6 L545.6 264.2 Z" fill="rgb(158,158,166)" stroke="rgb(158,158,166)" stroke-width="0.6"/>
<path d="M545.6 264.2 L541.6 263.6 L539.4 282.5 L547.3 282.5 Z" fill="rgb(138,138,138)" stroke="rgb(138,138,138)" stroke-width="0.6"/>
<path d="M547.3 282.5 L539.4 282.5 L541.6 299.0 L546.2 299.0 Z" fill="rgb(82,82,82)" stroke="rgb(82,82,82)" stroke-width="0.6"/>
<path d="M546.2 299.0 L541.6 299.0 L541.6 301.5 L546.2 301.5 Z" fill="rgb(118,122,148)" stroke="rgb(118,122,148)" stroke-width="0.6"/>
<path d="M540.5 254.5 L517.7 250.8 L521.1 263.1 L541.6 263.6 Z" fill="rgb(160,160,168)" stroke="rgb(160,160,168)" stroke-width="0.6"/>
<path d="M541.6 263.6 L521.1 263.1 L524.5 287.6 L539.4 282.5 Z" fill="rgb(130,130,138)" stroke="rgb(130,130,138)" stroke-width="0.6"/>
<path d="M539.4 282.5 L524.5 287.6 L523.4 299.0 L541.6 299.0 Z" fill="rgb(80,80,80)" stroke="rgb(80,80,80)" stroke-width="0.6"/>
<path d="M541.6 299.0 L523.4 299.0 L520.5 303.6 L541.6 301.5 Z" fill="rgb(118,122,148)" stroke="rgb(118,122,148)" stroke-width="0.6"/>
<path d="M517.7 250.8 L490.8 255.2 L488.8 269.4 L521.1 263.1 Z" fill="rgb(162,162,170)" stroke="rgb(162,162,170)" stroke-width="0.6"/>
<path d="M521.1 263.1 L488.8 269.4 L487.2 291.2 L524.5 287.6 Z" fill="rgb(138,138,138)" stroke="rgb(138,138,138)" stroke-width="0.6"/>
<path d="M524.5 287.6 L487.2 291.2 L488.3 301.3 L523.4 299.0 Z" fill="rgb(85,85,85)" stroke="rgb(85,85,85)" stroke-width="0.6"/>
<path d="M523.4 299.0 L488.3 301.3 L494.3 304.9 L520.5 303.6 Z" fill="rgb(118,122,148)" stroke="rgb(118,122,148)" stroke-width="0.6"/>
<path d="M490.8 255.2 L453.3 261.3 L452.3 266.4 L451.3 285.1 L488.8 269.4 Z" fill="rgb(166,166,174)" stroke="rgb(166,166,174)" stroke-width="0.6"/>
<path d="M488.8 269.4 L451.3 285.1 L487.2 291.2 Z" fill="rgb(145,145,145)" stroke="rgb(145,145,145)" stroke-width="0.6"/>
<path d="M487.2 291.2 L451.3 285.1 L451.3 295.3 L488.3 301.3 Z" fill="rgb(88,88,88)" stroke="rgb(88,88,88)" stroke-width="0.6"/>
<path d="M365.8 270.1 L368.3 267.8 L382.9 264.0 L397.5 262.1 L413.3 259.9 L428.5 260.2 L445.7 261.2 L453.3 261.3 L452.3 266.4 L442.5 268.5 L425.4 269.4 L412.7 269.1 L398.4 269.1 L383.5 270.4 L366.8 272.3 Z" fill="rgb(136,136,144)" stroke="rgb(136,136,144)" stroke-width="0.6"/>
<path d="M366.8 272.3 L383.5 270.4 L398.4 269.1 L412.7 269.1 L408.6 277.0 L394.3 279.2 L379.1 283.4 L370.2 285.3 Z" fill="rgb(112,112,112)" stroke="rgb(112,112,112)" stroke-width="0.6"/>
<path d="M412.7 269.1 L425.4 269.4 L408.6 277.0 Z" fill="rgb(104,104,104)" stroke="rgb(104,104,104)" stroke-width="0.6"/>
<path d="M379.1 283.4 L394.3 279.2 L408.6 277.0 L425.4 269.4 L428.2 288.4 L408.3 291.6 L393.4 291.3 L379.1 292.2 Z" fill="rgb(160,160,168)" stroke="rgb(160,160,168)" stroke-width="0.6"/>
<path d="M425.4 269.4 L442.5 268.5 L428.2 288.4 Z" fill="rgb(166,166,174)" stroke="rgb(166,166,174)" stroke-width="0.6"/>
<path d="M442.5 268.5 L452.3 266.4 L451.3 285.1 L428.2 288.4 Z" fill="rgb(126,126,134)" stroke="rgb(126,126,134)" stroke-width="0.6"/>
<path d="M379.1 292.2 L393.4 291.3 L408.3 291.6 L428.2 288.4 L432.3 296.4 L408.6 301.1 L395.3 301.1 L381.0 300.5 Z" fill="rgb(86,86,99)" stroke="rgb(86,86,99)" stroke-width="0.6"/>
<path d="M428.2 288.4 L451.3 285.1 L451.3 295.3 L432.3 296.4 Z" fill="rgb(76,76,90)" stroke="rgb(76,76,90)" stroke-width="0.6"/>
<path d="M860.0 249.5 L907.7 250.0 L906.0 264.2 L859.2 265.5 Z" fill="rgb(160,160,168)" stroke="rgb(160,160,168)" stroke-width="0.6"/>
<path d="M859.2 265.5 L906.0 264.2 L907.1 285.9 L860.0 286.0 Z" fill="rgb(146,146,146)" stroke="rgb(146,146,146)" stroke-width="0.6"/>
<path d="M860.0 286.0 L907.1 285.9 L903.1 306.9 L856.9 308.1 Z" fill="rgb(82,82,82)" stroke="rgb(82,82,82)" stroke-width="0.6"/>
<path d="M856.9 308.1 L903.1 306.9 L903.7 311.4 L859.2 311.3 Z" fill="rgb(118,122,148)" stroke="rgb(118,122,148)" stroke-width="0.6"/>
<path d="M907.7 250.0 L957.3 257.0 L955.6 266.7 L906.0 264.2 Z" fill="rgb(160,160,168)" stroke="rgb(160,160,168)" stroke-width="0.6"/>
<path d="M906.0 264.2 L955.6 266.7 L953.9 285.0 L907.1 285.9 Z" fill="rgb(142,142,142)" stroke="rgb(142,142,142)" stroke-width="0.6"/>
<path d="M907.1 285.9 L953.9 285.0 L955.0 301.5 L903.1 306.9 Z" fill="rgb(80,80,80)" stroke="rgb(80,80,80)" stroke-width="0.6"/>
<path d="M903.1 306.9 L955.0 301.5 L955.0 304.0 L903.7 311.4 Z" fill="rgb(118,122,148)" stroke="rgb(118,122,148)" stroke-width="0.6"/>
<path d="M957.3 257.0 L960.7 257.1 L959.6 266.1 L955.6 266.7 Z" fill="rgb(158,158,166)" stroke="rgb(158,158,166)" stroke-width="0.6"/>
<path d="M955.6 266.7 L959.6 266.1 L961.8 285.1 L953.9 285.0 Z" fill="rgb(136,136,136)" stroke="rgb(136,136,136)" stroke-width="0.6"/>
<path d="M953.9 285.0 L961.8 285.1 L959.6 301.5 L955.0 301.5 Z" fill="rgb(85,85,85)" stroke="rgb(85,85,85)" stroke-width="0.6"/>
<path d="M955.0 301.5 L959.6 301.5 L959.6 304.0 L955.0 304.0 Z" fill="rgb(118,122,148)" stroke="rgb(118,122,148)" stroke-width="0.6"/>
<path d="M960.7 257.1 L983.5 253.7 L980.1 266.0 L959.6 266.1 Z" fill="rgb(160,160,168)" stroke="rgb(160,160,168)" stroke-width="0.6"/>
<path d="M959.6 266.1 L980.1 266.0 L976.7 290.4 L961.8 285.1 Z" fill="rgb(136,136,136)" stroke="rgb(136,136,136)" stroke-width="0.6"/>
<path d="M961.8 285.1 L976.7 290.4 L977.8 301.8 L959.6 301.5 Z" fill="rgb(85,85,85)" stroke="rgb(85,85,85)" stroke-width="0.6"/>
<path d="M959.6 301.5 L977.8 301.8 L980.7 306.5 L959.6 304.0 Z" fill="rgb(118,122,148)" stroke="rgb(118,122,148)" stroke-width="0.6"/>
<path d="M983.5 253.7 L1010.4 258.6 L1012.4 272.8 L980.1 266.0 Z" fill="rgb(162,162,170)" stroke="rgb(162,162,170)" stroke-width="0.6"/>
<path d="M980.1 266.0 L1012.4 272.8 L1014.0 294.6 L976.7 290.4 Z" fill="rgb(138,138,138)" stroke="rgb(138,138,138)" stroke-width="0.6"/>
<path d="M976.7 290.4 L1014.0 294.6 L1012.9 304.7 L977.8 301.8 Z" fill="rgb(88,88,88)" stroke="rgb(88,88,88)" stroke-width="0.6"/>
<path d="M977.8 301.8 L1012.9 304.7 L1006.9 308.2 L980.7 306.5 Z" fill="rgb(118,122,148)" stroke="rgb(118,122,148)" stroke-width="0.6"/>
<path d="M1010.4 258.6 L1047.9 265.3 L1048.9 270.4 L1049.9 289.1 L1012.4 272.8 Z" fill="rgb(166,166,174)" stroke="rgb(166,166,174)" stroke-width="0.6"/>
<path d="M1012.4 272.8 L1049.9 289.1 L1014.0 294.6 Z" fill="rgb(145,145,145)" stroke="rgb(145,145,145)" stroke-width="0.6"/>
<path d="M1014.0 294.6 L1049.9 289.1 L1049.9 299.3 L1012.9 304.7 Z" fill="rgb(88,88,88)" stroke="rgb(88,88,88)" stroke-width="0.6"/>
<path d="M1135.4 275.5 L1132.9 273.1 L1118.3 269.1 L1103.7 266.9 L1087.9 264.5 L1072.7 264.6 L1055.5 265.3 L1047.9 265.3 L1048.9 270.4 L1058.7 272.6 L1075.8 273.8 L1088.5 273.7 L1102.8 273.9 L1117.7 275.5 L1134.4 277.6 Z" fill="rgb(136,136,144)" stroke="rgb(136,136,144)" stroke-width="0.6"/>
<path d="M1134.4 277.6 L1117.7 275.5 L1102.8 273.9 L1088.5 273.7 L1092.6 281.7 L1106.9 284.1 L1122.1 288.5 L1131.0 290.6 Z" fill="rgb(112,112,112)" stroke="rgb(112,112,112)" stroke-width="0.6"/>
<path d="M1088.5 273.7 L1075.8 273.8 L1092.6 281.7 Z" fill="rgb(104,104,104)" stroke="rgb(104,104,104)" stroke-width="0.6"/>
<path d="M1122.1 288.5 L1106.9 284.1 L1092.6 281.7 L1075.8 273.8 L1073.0 292.8 L1092.9 296.3 L1107.8 296.2 L1122.1 297.3 Z" fill="rgb(160,160,168)" stroke="rgb(160,160,168)" stroke-width="0.6"/>
<path d="M1075.8 273.8 L1058.7 272.6 L1073.0 292.8 Z" fill="rgb(166,166,174)" stroke="rgb(166,166,174)" stroke-width="0.6"/>
<path d="M1058.7 272.6 L1048.9 270.4 L1049.9 289.1 L1073.0 292.8 Z" fill="rgb(150,150,150)" stroke="rgb(150,150,150)" stroke-width="0.6"/>
<path d="M1122.1 297.3 L1107.8 296.2 L1092.9 296.3 L1073.0 292.8 L1068.9 300.7 L1092.6 305.8 L1105.9 306.0 L1120.2 305.6 Z" fill="rgb(86,86,99)" stroke="rgb(86,86,99)" stroke-width="0.6"/>
<path d="M1073.0 292.8 L1049.9 289.1 L1049.9 299.3 L1068.9 300.7 Z" fill="rgb(100,100,100)" stroke="rgb(100,100,100)" stroke-width="0.6"/>
<path d="M709.1 114.9 L709.1 114.9 L711.2 126.2 L700.6 123.4 Z" fill="rgb(140,140,140)" stroke="rgb(140,140,140)" stroke-width="0.6"/>
<path d="M709.1 114.9 L728.2 111.8 L728.2 124.1 L711.2 126.2 Z" fill="rgb(155,155,165)" stroke="rgb(155,155,165)" stroke-width="0.6"/>
<path d="M728.2 111.8 L738.1 113.0 L738.1 124.8 L728.2 124.1 Z" fill="rgb(140,140,150)" stroke="rgb(140,140,150)" stroke-width="0.6"/>
<path d="M738.1 113.0 L749.4 114.2 L748.0 124.8 L738.1 124.8 Z" fill="rgb(140,140,148)" stroke="rgb(140,140,148)" stroke-width="0.6"/>
<path d="M749.4 114.2 L757.9 113.5 L757.9 124.8 L748.0 124.8 Z" fill="rgb(140,140,148)" stroke="rgb(140,140,148)" stroke-width="0.6"/>
<path d="M757.9 113.5 L771.4 112.8 L769.2 124.1 L757.9 124.8 Z" fill="rgb(148,148,155)" stroke="rgb(148,148,155)" stroke-width="0.6"/>
<path d="M771.4 112.8 L790.5 114.9 L786.2 126.9 L769.2 124.1 Z" fill="rgb(150,150,158)" stroke="rgb(150,150,158)" stroke-width="0.6"/>
<path d="M790.5 114.9 L790.5 114.9 L801.8 129.1 L786.2 126.9 Z" fill="rgb(95,95,110)" stroke="rgb(95,95,110)" stroke-width="0.6"/>
<path d="M700.6 123.4 L711.2 126.2 L716.2 135.4 L696.4 138.0 Z" fill="rgb(130,130,130)" stroke="rgb(130,130,130)" stroke-width="0.6"/>
<path d="M711.2 126.2 L728.2 124.1 L728.2 133.3 L716.2 135.4 Z" fill="rgb(150,150,160)" stroke="rgb(150,150,160)" stroke-width="0.6"/>
<path d="M728.2 124.1 L738.1 124.8 L738.1 133.3 L728.2 133.3 Z" fill="rgb(140,140,150)" stroke="rgb(140,140,150)" stroke-width="0.6"/>
<path d="M738.1 124.8 L748.0 124.8 L747.3 133.3 L738.1 133.3 Z" fill="rgb(140,140,150)" stroke="rgb(140,140,150)" stroke-width="0.6"/>
<path d="M748.0 124.8 L757.9 124.8 L757.2 133.3 L747.3 133.3 Z" fill="rgb(140,140,150)" stroke="rgb(140,140,150)" stroke-width="0.6"/>
<path d="M757.9 124.8 L769.2 124.1 L767.1 134.7 L757.2 133.3 Z" fill="rgb(140,140,150)" stroke="rgb(140,140,150)" stroke-width="0.6"/>
<path d="M769.2 124.1 L786.2 126.9 L779.9 135.4 L767.1 134.7 Z" fill="rgb(145,145,155)" stroke="rgb(145,145,155)" stroke-width="0.6"/>
<path d="M786.2 126.9 L801.8 129.1 L797.5 140.4 L779.9 135.4 Z" fill="rgb(90,90,110)" stroke="rgb(90,90,110)" stroke-width="0.6"/>
<path d="M696.4 138.0 L716.2 135.4 L710.5 146.7 L696.4 147.5 Z" fill="rgb(140,140,140)" stroke="rgb(140,140,140)" stroke-width="0.6"/>
<path d="M716.2 135.4 L728.2 133.3 L727.5 148.9 L710.5 146.7 Z" fill="rgb(155,155,160)" stroke="rgb(155,155,160)" stroke-width="0.6"/>
<path d="M728.2 133.3 L738.1 133.3 L737.4 148.2 L727.5 148.9 Z" fill="rgb(165,165,170)" stroke="rgb(165,165,170)" stroke-width="0.6"/>
<path d="M738.1 133.3 L747.3 133.3 L748.0 148.9 L737.4 148.2 Z" fill="rgb(160,160,168)" stroke="rgb(160,160,168)" stroke-width="0.6"/>
<path d="M747.3 133.3 L757.2 133.3 L757.2 148.2 L748.0 148.9 Z" fill="rgb(155,155,165)" stroke="rgb(155,155,165)" stroke-width="0.6"/>
<path d="M757.2 133.3 L767.1 134.7 L768.5 148.2 L757.2 148.2 Z" fill="rgb(155,155,165)" stroke="rgb(155,155,165)" stroke-width="0.6"/>
<path d="M767.1 134.7 L779.9 135.4 L786.2 146.7 L768.5 148.2 Z" fill="rgb(135,135,145)" stroke="rgb(135,135,145)" stroke-width="0.6"/>
<path d="M779.9 135.4 L797.5 140.4 L803.9 147.5 L786.2 146.7 Z" fill="rgb(100,100,118)" stroke="rgb(100,100,118)" stroke-width="0.6"/>
<path d="M696.4 147.5 L710.5 146.7 L708.4 158.1 L699.2 158.8 Z" fill="rgb(140,140,140)" stroke="rgb(140,140,140)" stroke-width="0.6"/>
<path d="M710.5 146.7 L727.5 148.9 L725.4 161.6 L708.4 158.1 Z" fill="rgb(150,150,150)" stroke="rgb(150,150,150)" stroke-width="0.6"/>
<path d="M727.5 148.9 L737.4 148.2 L736.0 162.3 L725.4 161.6 Z" fill="rgb(145,145,145)" stroke="rgb(145,145,145)" stroke-width="0.6"/>
<path d="M737.4 148.2 L748.0 148.9 L747.3 163.0 L736.0 162.3 Z" fill="rgb(140,140,140)" stroke="rgb(140,140,140)" stroke-width="0.6"/>
<path d="M748.0 148.9 L757.2 148.2 L758.6 162.3 L747.3 163.0 Z" fill="rgb(125,125,130)" stroke="rgb(125,125,130)" stroke-width="0.6"/>
<path d="M757.2 148.2 L768.5 148.2 L769.2 162.3 L758.6 162.3 Z" fill="rgb(130,130,135)" stroke="rgb(130,130,135)" stroke-width="0.6"/>
<path d="M768.5 148.2 L786.2 146.7 L787.6 159.5 L769.2 162.3 Z" fill="rgb(120,120,125)" stroke="rgb(120,120,125)" stroke-width="0.6"/>
<path d="M786.2 146.7 L803.9 147.5 L800.4 164.4 L787.6 159.5 Z" fill="rgb(100,100,112)" stroke="rgb(100,100,112)" stroke-width="0.6"/>
<path d="M699.2 158.8 L708.4 158.1 L709.1 175.0 L705.6 181.4 Z" fill="rgb(140,140,140)" stroke="rgb(140,140,140)" stroke-width="0.6"/>
<path d="M708.4 158.1 L725.4 161.6 L726.1 181.4 L709.1 175.0 Z" fill="rgb(148,148,148)" stroke="rgb(148,148,148)" stroke-width="0.6"/>
<path d="M725.4 161.6 L736.0 162.3 L733.9 182.1 L726.1 181.4 Z" fill="rgb(140,140,140)" stroke="rgb(140,140,140)" stroke-width="0.6"/>
<path d="M736.0 162.3 L747.3 163.0 L747.3 182.1 L733.9 182.1 Z" fill="rgb(135,135,135)" stroke="rgb(135,135,135)" stroke-width="0.6"/>
<path d="M747.3 163.0 L758.6 162.3 L759.3 182.1 L747.3 182.1 Z" fill="rgb(130,130,130)" stroke="rgb(130,130,130)" stroke-width="0.6"/>
<path d="M758.6 162.3 L769.2 162.3 L768.5 181.4 L759.3 182.1 Z" fill="rgb(130,130,138)" stroke="rgb(130,130,138)" stroke-width="0.6"/>
<path d="M769.2 162.3 L787.6 159.5 L786.2 175.0 L768.5 181.4 Z" fill="rgb(110,110,118)" stroke="rgb(110,110,118)" stroke-width="0.6"/>
<path d="M787.6 159.5 L800.4 164.4 L795.4 184.2 L786.2 175.0 Z" fill="rgb(110,110,130)" stroke="rgb(110,110,130)" stroke-width="0.6"/>
<path d="M705.6 181.4 L709.1 175.0 L715.5 192.7 L709.1 192.7 Z" fill="rgb(150,150,150)" stroke="rgb(150,150,150)" stroke-width="0.6"/>
<path d="M709.1 175.0 L726.1 181.4 L715.5 192.7 L715.5 192.7 Z" fill="rgb(150,150,150)" stroke="rgb(150,150,150)" stroke-width="0.6"/>
<path d="M726.1 181.4 L733.9 182.1 L731.7 189.9 L715.5 192.7 Z" fill="rgb(160,160,160)" stroke="rgb(160,160,160)" stroke-width="0.6"/>
<path d="M733.9 182.1 L747.3 182.1 L747.3 189.6 L731.7 189.9 Z" fill="rgb(160,160,160)" stroke="rgb(160,160,160)" stroke-width="0.6"/>
<path d="M747.3 182.1 L759.3 182.1 L761.5 189.9 L747.3 189.6 Z" fill="rgb(160,160,160)" stroke="rgb(160,160,160)" stroke-width="0.6"/>
<path d="M759.3 182.1 L768.5 181.4 L779.1 193.4 L761.5 189.9 Z" fill="rgb(155,155,155)" stroke="rgb(155,155,155)" stroke-width="0.6"/>
<path d="M768.5 181.4 L786.2 175.0 L779.1 193.4 L779.1 193.4 Z" fill="rgb(110,110,120)" stroke="rgb(110,110,120)" stroke-width="0.6"/>
<path d="M786.2 175.0 L795.4 184.2 L792.0 194.0 L779.1 193.4 Z" fill="rgb(120,120,140)" stroke="rgb(120,120,140)" stroke-width="0.6"/>
<path d="M709.1 192.7 L715.5 192.7 L721.8 199.1 L713.3 204.1 Z" fill="rgb(140,140,140)" stroke="rgb(140,140,140)" stroke-width="0.6"/>
<path d="M715.5 192.7 L715.5 192.7 L721.8 199.1 L721.8 199.1 Z" fill="rgb(148,148,155)" stroke="rgb(148,148,155)" stroke-width="0.6"/>
<path d="M715.5 192.7 L731.7 189.9 L733.2 199.1 L721.8 199.1 Z" fill="rgb(140,140,148)" stroke="rgb(140,140,148)" stroke-width="0.6"/>
<path d="M731.7 189.9 L747.3 189.6 L746.6 202.6 L733.2 199.1 Z" fill="rgb(140,140,148)" stroke="rgb(140,140,148)" stroke-width="0.6"/>
<path d="M747.3 189.6 L761.5 189.9 L758.6 199.1 L746.6 202.6 Z" fill="rgb(130,130,140)" stroke="rgb(130,130,140)" stroke-width="0.6"/>
<path d="M761.5 189.9 L779.1 193.4 L770.7 199.1 L758.6 199.1 Z" fill="rgb(110,110,128)" stroke="rgb(110,110,128)" stroke-width="0.6"/>
<path d="M779.1 193.4 L779.1 193.4 L787.6 196.3 L770.7 199.1 Z" fill="rgb(110,110,128)" stroke="rgb(110,110,128)" stroke-width="0.6"/>
<path d="M779.1 193.4 L792.0 194.0 L789.1 204.1 L787.6 196.3 Z" fill="rgb(110,110,128)" stroke="rgb(110,110,128)" stroke-width="0.6"/>
<path d="M713.3 204.1 L721.8 199.1 L718.3 216.8 L718.3 216.8 Z" fill="rgb(110,110,110)" stroke="rgb(110,110,110)" stroke-width="0.6"/>
<path d="M721.8 199.1 L721.8 199.1 L718.3 216.8 L718.3 216.8 Z" fill="rgb(110,110,110)" stroke="rgb(110,110,110)" stroke-width="0.6"/>
<path d="M721.8 199.1 L733.2 199.1 L732.5 218.2 L718.3 216.8 Z" fill="rgb(100,100,100)" stroke="rgb(100,100,100)" stroke-width="0.6"/>
<path d="M733.2 199.1 L746.6 202.6 L746.6 220.3 L732.5 218.2 Z" fill="rgb(100,100,100)" stroke="rgb(100,100,100)" stroke-width="0.6"/>
<path d="M746.6 202.6 L758.6 199.1 L760.8 218.2 L746.6 220.3 Z" fill="rgb(90,90,90)" stroke="rgb(90,90,90)" stroke-width="0.6"/>
<path d="M758.6 199.1 L770.7 199.1 L780.6 216.8 L760.8 218.2 Z" fill="rgb(92,92,92)" stroke="rgb(92,92,92)" stroke-width="0.6"/>
<path d="M770.7 199.1 L787.6 196.3 L780.6 216.8 L780.6 216.8 Z" fill="rgb(118,118,140)" stroke="rgb(118,118,140)" stroke-width="0.6"/>
<path d="M787.6 196.3 L789.1 204.1 L780.6 216.8 L780.6 216.8 Z" fill="rgb(100,100,115)" stroke="rgb(100,100,115)" stroke-width="0.6"/>
<path d="M718.3 216.8 L718.3 216.8 L718.3 216.8 L718.3 216.8 Z" fill="rgb(85,85,97)" stroke="rgb(85,85,97)" stroke-width="0.6"/>
<path d="M718.3 216.8 L718.3 216.8 L728.2 222.5 L718.3 216.8 Z" fill="rgb(85,85,97)" stroke="rgb(85,85,97)" stroke-width="0.6"/>
<path d="M718.3 216.8 L732.5 218.2 L728.2 222.5 L728.2 222.5 Z" fill="rgb(85,85,97)" stroke="rgb(85,85,97)" stroke-width="0.6"/>
<path d="M732.5 218.2 L746.6 220.3 L746.6 226.7 L728.2 222.5 Z" fill="rgb(85,85,97)" stroke="rgb(85,85,97)" stroke-width="0.6"/>
<path d="M746.6 220.3 L760.8 218.2 L769.2 222.5 L746.6 226.7 Z" fill="rgb(85,85,97)" stroke="rgb(85,85,97)" stroke-width="0.6"/>
<path d="M760.8 218.2 L780.6 216.8 L769.2 222.5 L769.2 222.5 Z" fill="rgb(85,85,97)" stroke="rgb(85,85,97)" stroke-width="0.6"/>
<path d="M780.6 216.8 L780.6 216.8 L780.6 216.8 L769.2 222.5 Z" fill="rgb(90,90,105)" stroke="rgb(90,90,105)" stroke-width="0.6"/>
<path d="M780.6 216.8 L780.6 216.8 L780.6 216.8 L780.6 216.8 Z" fill="rgb(90,90,105)" stroke="rgb(90,90,105)" stroke-width="0.6"/>
<path d="M801.8 129.1 L803.9 147.5 L800.4 164.4 L795.4 184.2 L789.1 204.1 L780.6 216.8 L776.3 216.8 L782.0 206.9 L789.1 184.2 L796.1 158.8 L797.5 140.4 Z" fill="rgb(128,132,158)" stroke="rgb(128,132,158)" stroke-width="0.6"/>
<path d="M569.3 101.9 L628.5 124.4 M569.3 104.5 L628.5 128.3 M569.3 112.6 L628.5 149.3 M569.3 111.0 L628.5 146.9 M569.3 101.9 L569.3 112.6 M628.5 124.4 L697.6 124.4 M628.5 128.3 L697.6 128.3 M628.5 146.9 L697.6 146.9 M628.5 149.3 L697.6 149.3 M628.5 124.4 L628.5 149.3 M640.3 124.4 L640.3 149.3 M654.0 124.4 L654.0 149.3 M674.1 124.4 L674.1 149.3 M697.6 124.4 L697.6 149.3 M928.6 103.9 L871.4 125.2 M928.6 107.0 L871.4 129.0 M928.6 115.9 L871.4 150.0 M928.6 114.0 L871.4 147.5 M928.6 103.9 L928.6 115.9 M803.0 125.2 L871.4 125.2 M803.0 129.0 L871.4 129.0 M803.0 147.5 L871.4 147.5 M803.0 150.0 L871.4 150.0 M803.0 125.2 L803.0 150.0 M826.1 125.2 L826.1 150.0 M846.1 125.2 L846.1 150.0 M859.4 125.2 L859.4 150.0 M871.4 125.2 L871.4 150.0 M650.1 171.4 L654.0 167.5 L668.7 160.1 L687.3 155.2 L698.0 155.2 M650.1 173.0 L656.0 169.5 L668.7 162.6 L687.3 158.6 L698.0 159.6 M650.1 175.3 L668.2 173.3 L686.3 173.3 L701.5 174.3 M668.7 160.1 L668.2 173.3 M687.3 155.2 L686.3 173.3 M848.8 175.7 L846.0 171.0 L831.5 162.4 L812.8 157.1 L800.8 157.1 M848.8 176.5 L844.0 173.0 L831.5 165.0 L812.8 160.5 L800.8 161.0 M848.8 177.0 L830.1 175.7 L812.8 174.4 L798.0 174.4 M831.5 162.4 L830.1 175.7 M812.8 157.1 L812.8 174.4 M641.3 248.4 L660.4 242.6 L682.4 231.2 L695.0 216.1 M860.0 249.5 L840.9 243.4 L818.9 231.2 L806.7 217.1 M641.3 248.4 L640.6 264.7 L639.0 285.3 L642.9 307.4 M860.0 249.5 L859.2 265.5 L860.0 286.0 L856.9 308.1 M660.4 242.6 L662.6 256.3 L661.1 286.0 L665.7 317.0 M840.9 243.4 L837.1 257.9 L837.9 287.6 L834.8 316.5 M682.4 231.2 L680.2 240.4 L684.7 250.3 L674.1 270.4 L677.9 298.2 L697.9 332.3 M818.9 231.2 L819.6 241.1 L814.3 251.0 L824.2 270.8 L818.1 299.0 L801.3 333.2 M695.0 216.1 L692.3 225.9 L680.2 240.4 M806.7 217.1 L807.4 227.4 L819.6 241.1 M692.3 225.9 L704.5 236.5 L718.5 218.0 M807.4 227.4 L795.3 236.5 L779.6 219.0 M704.5 236.5 L684.7 250.3 M795.3 236.5 L814.3 251.0 M727.4 222.1 L726.6 238.1 L716.7 253.3 L704.5 277.4 L704.5 301.3 L722.7 328.2 M770.0 222.5 L772.4 238.1 L781.5 254.1 L792.2 276.9 L792.2 302.0 L774.4 328.2 M704.5 236.5 L726.6 238.1 L748.7 240.4 M795.3 236.5 L772.4 238.1 L748.7 240.4 M684.7 250.3 L716.7 253.3 L748.7 257.6 M814.3 251.0 L781.5 254.1 L748.7 257.6 M662.6 256.3 L684.7 250.3 M837.1 257.9 L814.3 251.0 M662.6 256.3 L680.2 240.4 M837.1 257.9 L819.6 241.1 M640.6 264.7 L662.6 256.3 L674.1 270.4 L704.5 277.4 L748.7 287.6 M859.2 265.5 L837.1 257.9 L824.2 270.8 L792.2 276.9 L748.7 287.6 M639.0 285.3 L661.1 286.0 L677.9 298.2 L704.5 301.3 L748.7 303.6 M860.0 286.0 L837.9 287.6 L818.1 299.0 L792.2 302.0 L748.7 303.6 M642.9 307.4 L665.7 317.0 L697.9 332.3 L722.7 328.2 L748.6 322.4 M856.9 308.1 L834.8 316.5 L801.3 333.2 L774.4 328.2 L748.6 322.4 M718.5 218.0 L727.4 222.1 L748.7 227.4 M779.6 219.0 L770.0 222.5 L748.7 227.4 M695.0 216.1 L718.5 218.0 M806.7 217.1 L779.6 219.0 M695.0 216.1 L713.0 203.8 M806.7 217.1 L786.7 202.3 M748.7 227.4 L748.7 240.4 L748.7 257.6 L748.7 287.6 L748.7 303.6 L748.6 322.4 M665.7 317.0 L697.9 332.3 L722.7 328.2 L748.6 322.4 L774.4 328.2 L801.3 333.2 L834.8 316.5 M672.5 358.0 L697.9 363.3 L722.7 360.0 L748.6 355.9 L775.4 361.3 L801.3 364.2 L828.1 359.2 M682.4 392.3 L698.9 398.5 L723.7 389.0 L748.6 387.1 L774.4 390.2 L800.2 399.3 L817.2 393.1 M685.5 427.4 L702.7 433.6 L726.2 433.6 L748.6 434.4 L772.3 433.6 L796.5 434.4 L815.7 428.2 M685.5 444.4 L701.4 450.6 L726.2 450.6 L748.6 455.7 L771.3 451.6 L797.8 450.6 L815.7 445.4 M683.4 462.6 L698.9 466.7 L726.2 467.5 L748.6 474.3 L771.3 468.8 L799.8 466.7 L816.8 463.4 M681.4 473.3 L698.5 478.5 L726.2 479.5 L748.6 484.7 L771.3 479.5 L800.2 478.5 L818.4 474.3 M665.7 317.0 L672.5 358.0 L682.4 392.3 L685.5 427.4 L685.5 444.4 L683.4 462.6 L681.4 473.3 M697.9 332.3 L697.9 363.3 L698.9 398.5 L702.7 433.6 L701.4 450.6 L698.9 466.7 L698.5 478.5 M722.7 328.2 L722.7 360.0 L723.7 389.0 L726.2 433.6 L726.2 450.6 L726.2 467.5 L726.2 479.5 M748.6 322.4 L748.6 355.9 L748.6 387.1 L748.6 434.4 L748.6 455.7 L748.6 474.3 L748.6 484.7 M774.4 328.2 L775.4 361.3 L774.4 390.2 L772.3 433.6 L771.3 451.6 L771.3 468.8 L771.3 479.5 M801.3 333.2 L801.3 364.2 L800.2 399.3 L796.5 434.4 L797.8 450.6 L799.8 466.7 L800.2 478.5 M834.8 316.5 L828.1 359.2 L817.2 393.1 L815.7 428.2 L815.7 445.4 L816.8 463.4 L818.4 474.3 M681.4 473.3 L698.5 478.5 L726.2 479.5 L748.6 484.7 M678.6 505.1 L693.1 511.3 L732.3 512.4 L745.8 505.1 M676.1 538.2 L693.1 541.3 L732.3 542.3 L746.8 539.2 M679.6 580.6 L695.1 587.8 L731.3 589.4 L744.7 579.5 M695.1 619.8 L701.3 621.9 L725.1 621.9 L734.4 616.7 M696.9 632.1 L703.1 633.1 L722.7 633.1 L731.0 632.1 M698.9 641.4 L704.1 642.4 L722.7 642.4 L730.0 641.4 M701.0 652.7 L706.2 656.9 L723.7 656.9 L728.9 650.7 M697.9 666.2 L704.1 672.4 L724.8 672.4 L732.0 666.2 M692.7 688.9 L702.0 688.9 L726.8 688.9 L738.2 687.9 M692.7 711.7 L702.0 714.8 L727.9 714.8 L738.2 709.6 M698.9 738.5 L706.2 742.7 L723.7 742.7 L732.0 738.5 M701.0 755.1 L707.2 758.2 L722.7 758.2 L731.0 755.1 M701.0 770.6 L707.2 772.6 L723.7 772.6 L732.0 770.6 M700.0 786.1 L706.2 789.2 L723.7 789.2 L733.0 786.1 M694.8 801.6 L703.1 803.6 L724.8 804.7 L739.3 801.6 M694.8 811.9 L702.0 815.0 L725.8 815.0 L740.3 809.8 M681.4 473.3 L678.6 505.1 L676.1 538.2 L679.6 580.6 L695.1 619.8 L696.9 632.1 L698.9 641.4 L701.0 652.7 L697.9 666.2 L692.7 688.9 L692.7 711.7 L698.9 738.5 L701.0 755.1 L701.0 770.6 L700.0 786.1 L694.8 801.6 L694.8 811.9 M698.5 478.5 L693.1 511.3 L693.1 541.3 L695.1 587.8 L701.3 621.9 L703.1 633.1 L704.1 642.4 L706.2 656.9 L704.1 672.4 L702.0 688.9 L702.0 714.8 L706.2 742.7 L707.2 758.2 L707.2 772.6 L706.2 789.2 L703.1 803.6 L702.0 815.0 M726.2 479.5 L732.3 512.4 L732.3 542.3 L731.3 589.4 L725.1 621.9 L722.7 633.1 L722.7 642.4 L723.7 656.9 L724.8 672.4 L726.8 688.9 L727.9 714.8 L723.7 742.7 L722.7 758.2 L723.7 772.6 L723.7 789.2 L724.8 804.7 L725.8 815.0 M748.6 484.7 L745.8 505.1 L746.8 539.2 L744.7 579.5 L734.4 616.7 L731.0 632.1 L730.0 641.4 L728.9 650.7 L732.0 666.2 L738.2 687.9 L738.2 709.6 L732.0 738.5 L731.0 755.1 L732.0 770.6 L733.0 786.1 L739.3 801.6 L740.3 809.8 M818.4 474.3 L800.2 478.5 L771.3 479.5 L752.0 488.0 M821.2 506.2 L804.7 512.4 L765.4 512.4 L754.0 505.1 M823.3 539.2 L804.7 542.3 L765.4 542.3 L753.0 539.2 M820.2 581.6 L801.6 589.4 L766.4 589.4 L755.1 579.5 M805.7 618.8 L796.4 622.5 L773.7 621.9 L766.4 615.7 M803.3 632.1 L796.1 633.1 L775.4 633.1 L769.2 632.1 M801.3 641.4 L795.1 642.4 L776.5 642.4 L771.3 641.4 M800.2 652.7 L794.0 657.9 L776.5 657.9 L772.3 651.7 M802.3 666.2 L795.1 673.4 L775.4 673.4 L769.2 667.2 M806.4 688.9 L797.1 688.9 L772.3 688.9 L763.0 688.9 M807.5 710.6 L796.1 714.8 L771.3 714.8 L763.0 712.7 M801.3 739.6 L794.0 742.7 L775.4 742.7 L767.2 739.6 M799.2 756.1 L793.0 758.2 L776.5 758.2 L769.2 756.1 M800.2 770.6 L793.0 772.6 L776.5 772.6 L769.2 770.6 M801.3 787.1 L794.0 789.2 L775.4 789.2 L768.2 787.1 M805.4 801.6 L795.1 804.7 L772.3 803.6 L763.0 801.6 M806.4 811.9 L796.1 815.0 L773.4 815.0 L762.0 810.9 M818.4 474.3 L821.2 506.2 L823.3 539.2 L820.2 581.6 L805.7 618.8 L803.3 632.1 L801.3 641.4 L800.2 652.7 L802.3 666.2 L806.4 688.9 L807.5 710.6 L801.3 739.6 L799.2 756.1 L800.2 770.6 L801.3 787.1 L805.4 801.6 L806.4 811.9 M800.2 478.5 L804.7 512.4 L804.7 542.3 L801.6 589.4 L796.4 622.5 L796.1 633.1 L795.1 642.4 L794.0 657.9 L795.1 673.4 L797.1 688.9 L796.1 714.8 L794.0 742.7 L793.0 758.2 L793.0 772.6 L794.0 789.2 L795.1 804.7 L796.1 815.0 M771.3 479.5 L765.4 512.4 L765.4 542.3 L766.4 589.4 L773.7 621.9 L775.4 633.1 L776.5 642.4 L776.5 657.9 L775.4 673.4 L772.3 688.9 L771.3 714.8 L775.4 742.7 L776.5 758.2 L776.5 772.6 L775.4 789.2 L772.3 803.6 L773.4 815.0 M752.0 488.0 L754.0 505.1 L753.0 539.2 L755.1 579.5 L766.4 615.7 L769.2 632.1 L771.3 641.4 L772.3 651.7 L769.2 667.2 L763.0 688.9 L763.0 712.7 L767.2 739.6 L769.2 756.1 L769.2 770.6 L768.2 787.1 L763.0 801.6 L762.0 810.9 M641.3 248.4 L640.6 264.7 L639.0 285.3 L642.9 307.4 M593.5 248.3 L595.2 262.5 L594.1 284.2 L598.1 305.3 M543.9 254.5 L545.6 264.2 L547.3 282.5 L546.2 299.0 M540.5 254.5 L541.6 263.6 L539.4 282.5 L541.6 299.0 M517.7 250.8 L521.1 263.1 L524.5 287.6 L523.4 299.0 M490.8 255.2 L488.8 269.4 L487.2 291.2 L488.3 301.3 M641.3 248.4 L593.5 248.3 L543.9 254.5 L540.5 254.5 L517.7 250.8 L490.8 255.2 M640.6 264.7 L595.2 262.5 L545.6 264.2 L541.6 263.6 L521.1 263.1 L488.8 269.4 M639.0 285.3 L594.1 284.2 L547.3 282.5 L539.4 282.5 L524.5 287.6 L487.2 291.2 M642.9 307.4 L598.1 305.3 L546.2 299.0 L541.6 299.0 L523.4 299.0 L488.3 301.3 M642.0 310.4 L597.5 309.8 L546.2 301.5 L541.6 301.5 L520.5 303.6 L494.3 304.9 M490.8 255.2 L453.3 261.3 M488.8 269.4 L451.3 285.1 M487.2 291.2 L451.3 285.1 M488.3 301.3 L451.3 295.3 M453.3 261.3 L452.3 266.4 L451.3 285.1 L451.3 295.3 M365.8 270.1 L368.3 267.8 L382.9 264.0 L397.5 262.1 L413.3 259.9 L428.5 260.2 L445.7 261.2 L453.3 261.3 M366.8 272.3 L383.5 270.4 L398.4 269.1 L412.7 269.1 L425.4 269.4 L442.5 268.5 L452.3 266.4 M370.2 285.3 L379.1 283.4 L394.3 279.2 L408.6 277.0 L425.4 269.4 M379.1 292.2 L393.4 291.3 L408.3 291.6 L428.2 288.4 L451.3 285.1 M381.0 300.5 L395.3 301.1 L408.6 301.1 L432.3 296.4 L451.3 295.3 M365.8 270.1 L366.8 272.3 L370.2 285.3 M382.9 264.0 L383.5 270.4 L379.1 283.4 M397.5 262.1 L398.4 269.1 L394.3 279.2 M413.3 259.9 L412.7 269.1 L408.6 277.0 M428.5 260.2 L425.4 269.4 L428.2 288.4 L432.3 296.4 M442.5 268.5 L428.2 288.4 M445.7 261.2 L442.5 268.5 M379.1 283.4 L379.1 292.2 L381.0 300.5 M394.3 279.2 L393.4 291.3 L395.3 301.1 M408.6 277.0 L408.3 291.6 L408.6 301.1 M860.0 249.5 L859.2 265.5 L860.0 286.0 L856.9 308.1 M907.7 250.0 L906.0 264.2 L907.1 285.9 L903.1 306.9 M957.3 257.0 L955.6 266.7 L953.9 285.0 L955.0 301.5 M960.7 257.1 L959.6 266.1 L961.8 285.1 L959.6 301.5 M983.5 253.7 L980.1 266.0 L976.7 290.4 L977.8 301.8 M1010.4 258.6 L1012.4 272.8 L1014.0 294.6 L1012.9 304.7 M860.0 249.5 L907.7 250.0 L957.3 257.0 L960.7 257.1 L983.5 253.7 L1010.4 258.6 M859.2 265.5 L906.0 264.2 L955.6 266.7 L959.6 266.1 L980.1 266.0 L1012.4 272.8 M860.0 286.0 L907.1 285.9 L953.9 285.0 L961.8 285.1 L976.7 290.4 L1014.0 294.6 M856.9 308.1 L903.1 306.9 L955.0 301.5 L959.6 301.5 L977.8 301.8 L1012.9 304.7 M859.2 311.3 L903.7 311.4 L955.0 304.0 L959.6 304.0 L980.7 306.5 L1006.9 308.2 M1010.4 258.6 L1047.9 265.3 M1012.4 272.8 L1049.9 289.1 M1014.0 294.6 L1049.9 289.1 M1012.9 304.7 L1049.9 299.3 M1047.9 265.3 L1048.9 270.4 L1049.9 289.1 L1049.9 299.3 M1135.4 275.5 L1132.9 273.1 L1118.3 269.1 L1103.7 266.9 L1087.9 264.5 L1072.7 264.6 L1055.5 265.3 L1047.9 265.3 M1134.4 277.6 L1117.7 275.5 L1102.8 273.9 L1088.5 273.7 L1075.8 273.8 L1058.7 272.6 L1048.9 270.4 M1131.0 290.6 L1122.1 288.5 L1106.9 284.1 L1092.6 281.7 L1075.8 273.8 M1122.1 297.3 L1107.8 296.2 L1092.9 296.3 L1073.0 292.8 L1049.9 289.1 M1120.2 305.6 L1105.9 306.0 L1092.6 305.8 L1068.9 300.7 L1049.9 299.3 M1135.4 275.5 L1134.4 277.6 L1131.0 290.6 M1118.3 269.1 L1117.7 275.5 L1122.1 288.5 M1103.7 266.9 L1102.8 273.9 L1106.9 284.1 M1087.9 264.5 L1088.5 273.7 L1092.6 281.7 M1072.7 264.6 L1075.8 273.8 L1073.0 292.8 L1068.9 300.7 M1058.7 272.6 L1073.0 292.8 M1055.5 265.3 L1058.7 272.6 M1122.1 288.5 L1122.1 297.3 L1120.2 305.6 M1106.9 284.1 L1107.8 296.2 L1105.9 306.0 M1092.6 281.7 L1092.9 296.3 L1092.6 305.8 M797.5 140.4 L796.1 158.8 L789.1 184.2 L782.0 206.9 L776.3 216.8 M709.1 114.9 L709.1 114.9 L728.2 111.8 L738.1 113.0 L749.4 114.2 L757.9 113.5 L771.4 112.8 L790.5 114.9 L790.5 114.9 M700.6 123.4 L711.2 126.2 L728.2 124.1 L738.1 124.8 L748.0 124.8 L757.9 124.8 L769.2 124.1 L786.2 126.9 L801.8 129.1 M696.4 138.0 L716.2 135.4 L728.2 133.3 L738.1 133.3 L747.3 133.3 L757.2 133.3 L767.1 134.7 L779.9 135.4 L797.5 140.4 M696.4 147.5 L710.5 146.7 L727.5 148.9 L737.4 148.2 L748.0 148.9 L757.2 148.2 L768.5 148.2 L786.2 146.7 L803.9 147.5 M699.2 158.8 L708.4 158.1 L725.4 161.6 L736.0 162.3 L747.3 163.0 L758.6 162.3 L769.2 162.3 L787.6 159.5 L800.4 164.4 M705.6 181.4 L709.1 175.0 L726.1 181.4 L733.9 182.1 L747.3 182.1 L759.3 182.1 L768.5 181.4 L786.2 175.0 L795.4 184.2 M709.1 192.7 L715.5 192.7 L715.5 192.7 L731.7 189.9 L747.3 189.6 L761.5 189.9 L779.1 193.4 L779.1 193.4 L792.0 194.0 M713.3 204.1 L721.8 199.1 L721.8 199.1 L733.2 199.1 L746.6 202.6 L758.6 199.1 L770.7 199.1 L787.6 196.3 L789.1 204.1 M718.3 216.8 L718.3 216.8 L718.3 216.8 L732.5 218.2 L746.6 220.3 L760.8 218.2 L780.6 216.8 L780.6 216.8 L780.6 216.8 M718.3 216.8 L718.3 216.8 L728.2 222.5 L728.2 222.5 L746.6 226.7 L769.2 222.5 L769.2 222.5 L780.6 216.8 L780.6 216.8 M709.1 114.9 L700.6 123.4 L696.4 138.0 L696.4 147.5 L699.2 158.8 L705.6 181.4 L709.1 192.7 L713.3 204.1 L718.3 216.8 L718.3 216.8 M709.1 114.9 L711.2 126.2 L716.2 135.4 L710.5 146.7 L708.4 158.1 L709.1 175.0 L715.5 192.7 L721.8 199.1 L718.3 216.8 L718.3 216.8 M728.2 111.8 L728.2 124.1 L728.2 133.3 L727.5 148.9 L725.4 161.6 L726.1 181.4 L715.5 192.7 L721.8 199.1 L718.3 216.8 L728.2 222.5 M738.1 113.0 L738.1 124.8 L738.1 133.3 L737.4 148.2 L736.0 162.3 L733.9 182.1 L731.7 189.9 L733.2 199.1 L732.5 218.2 L728.2 222.5 M749.4 114.2 L748.0 124.8 L747.3 133.3 L748.0 148.9 L747.3 163.0 L747.3 182.1 L747.3 189.6 L746.6 202.6 L746.6 220.3 L746.6 226.7 M757.9 113.5 L757.9 124.8 L757.2 133.3 L757.2 148.2 L758.6 162.3 L759.3 182.1 L761.5 189.9 L758.6 199.1 L760.8 218.2 L769.2 222.5 M771.4 112.8 L769.2 124.1 L767.1 134.7 L768.5 148.2 L769.2 162.3 L768.5 181.4 L779.1 193.4 L770.7 199.1 L780.6 216.8 L769.2 222.5 M790.5 114.9 L786.2 126.9 L779.9 135.4 L786.2 146.7 L787.6 159.5 L786.2 175.0 L779.1 193.4 L787.6 196.3 L780.6 216.8 L780.6 216.8 M790.5 114.9 L801.8 129.1 L797.5 140.4 L803.9 147.5 L800.4 164.4 L795.4 184.2 L792.0 194.0 L789.1 204.1 L780.6 216.8 L780.6 216.8" fill="none" stroke="#000" stroke-width="1" shape-rendering="crispEdges"/>
<path d="M567.8 100.4 h3 v3 h-3 Z M567.8 111.1 h3 v3 h-3 Z M627.0 122.9 h3 v3 h-3 Z M627.0 126.8 h3 v3 h-3 Z M627.0 145.4 h3 v3 h-3 Z M627.0 147.8 h3 v3 h-3 Z M638.8 122.9 h3 v3 h-3 Z M638.8 126.8 h3 v3 h-3 Z M638.8 145.4 h3 v3 h-3 Z M638.8 147.8 h3 v3 h-3 Z M652.5 122.9 h3 v3 h-3 Z M652.5 126.8 h3 v3 h-3 Z M652.5 145.4 h3 v3 h-3 Z M652.5 147.8 h3 v3 h-3 Z M672.6 122.9 h3 v3 h-3 Z M672.6 126.8 h3 v3 h-3 Z M672.6 145.4 h3 v3 h-3 Z M672.6 147.8 h3 v3 h-3 Z M696.1 122.9 h3 v3 h-3 Z M696.1 126.8 h3 v3 h-3 Z M696.1 145.4 h3 v3 h-3 Z M696.1 147.8 h3 v3 h-3 Z M927.1 102.4 h3 v3 h-3 Z M927.1 114.4 h3 v3 h-3 Z M801.5 123.7 h3 v3 h-3 Z M801.5 127.5 h3 v3 h-3 Z M801.5 146.0 h3 v3 h-3 Z M801.5 148.5 h3 v3 h-3 Z M824.6 123.7 h3 v3 h-3 Z M824.6 127.5 h3 v3 h-3 Z M824.6 146.0 h3 v3 h-3 Z M824.6 148.5 h3 v3 h-3 Z M844.6 123.7 h3 v3 h-3 Z M844.6 127.5 h3 v3 h-3 Z M844.6 146.0 h3 v3 h-3 Z M844.6 148.5 h3 v3 h-3 Z M857.9 123.7 h3 v3 h-3 Z M857.9 127.5 h3 v3 h-3 Z M857.9 146.0 h3 v3 h-3 Z M857.9 148.5 h3 v3 h-3 Z M869.9 123.7 h3 v3 h-3 Z M869.9 127.5 h3 v3 h-3 Z M869.9 146.0 h3 v3 h-3 Z M869.9 148.5 h3 v3 h-3 Z M648.6 169.9 h3 v3 h-3 Z M652.5 166.0 h3 v3 h-3 Z M667.2 158.6 h3 v3 h-3 Z M685.8 153.7 h3 v3 h-3 Z M696.5 153.7 h3 v3 h-3 Z M648.6 173.8 h3 v3 h-3 Z M666.7 171.8 h3 v3 h-3 Z M684.8 171.8 h3 v3 h-3 Z M700.0 172.8 h3 v3 h-3 Z M847.3 174.2 h3 v3 h-3 Z M844.5 169.5 h3 v3 h-3 Z M830.0 160.9 h3 v3 h-3 Z M811.3 155.6 h3 v3 h-3 Z M799.3 155.6 h3 v3 h-3 Z M847.3 175.5 h3 v3 h-3 Z M828.6 174.2 h3 v3 h-3 Z M811.3 172.9 h3 v3 h-3 Z M796.5 172.9 h3 v3 h-3 Z M639.8 246.9 h3 v3 h-3 Z M658.9 241.1 h3 v3 h-3 Z M680.9 229.7 h3 v3 h-3 Z M693.5 214.6 h3 v3 h-3 Z M690.8 224.4 h3 v3 h-3 Z M678.7 238.9 h3 v3 h-3 Z M717.0 216.5 h3 v3 h-3 Z M725.9 220.6 h3 v3 h-3 Z M703.0 235.0 h3 v3 h-3 Z M725.1 236.6 h3 v3 h-3 Z M747.2 238.9 h3 v3 h-3 Z M683.2 248.8 h3 v3 h-3 Z M715.2 251.8 h3 v3 h-3 Z M747.2 256.1 h3 v3 h-3 Z M661.1 254.8 h3 v3 h-3 Z M639.1 263.2 h3 v3 h-3 Z M672.6 268.9 h3 v3 h-3 Z M703.0 275.9 h3 v3 h-3 Z M747.2 286.1 h3 v3 h-3 Z M659.6 284.5 h3 v3 h-3 Z M637.5 283.8 h3 v3 h-3 Z M676.4 296.7 h3 v3 h-3 Z M703.0 299.8 h3 v3 h-3 Z M747.2 302.1 h3 v3 h-3 Z M641.4 305.9 h3 v3 h-3 Z M664.2 315.5 h3 v3 h-3 Z M696.4 330.8 h3 v3 h-3 Z M721.2 326.7 h3 v3 h-3 Z M747.1 320.9 h3 v3 h-3 Z M747.2 225.9 h3 v3 h-3 Z M858.5 248.0 h3 v3 h-3 Z M839.4 241.9 h3 v3 h-3 Z M817.4 229.7 h3 v3 h-3 Z M805.2 215.6 h3 v3 h-3 Z M805.9 225.9 h3 v3 h-3 Z M818.1 239.6 h3 v3 h-3 Z M778.1 217.5 h3 v3 h-3 Z M768.5 221.0 h3 v3 h-3 Z M793.8 235.0 h3 v3 h-3 Z M770.9 236.6 h3 v3 h-3 Z M747.2 238.9 h3 v3 h-3 Z M812.8 249.5 h3 v3 h-3 Z M780.0 252.6 h3 v3 h-3 Z M747.2 256.1 h3 v3 h-3 Z M835.6 256.4 h3 v3 h-3 Z M857.7 264.0 h3 v3 h-3 Z M822.7 269.3 h3 v3 h-3 Z M790.7 275.4 h3 v3 h-3 Z M747.2 286.1 h3 v3 h-3 Z M836.4 286.1 h3 v3 h-3 Z M858.5 284.5 h3 v3 h-3 Z M816.6 297.5 h3 v3 h-3 Z M790.7 300.5 h3 v3 h-3 Z M747.2 302.1 h3 v3 h-3 Z M855.4 306.6 h3 v3 h-3 Z M833.3 315.0 h3 v3 h-3 Z M799.8 331.7 h3 v3 h-3 Z M772.9 326.7 h3 v3 h-3 Z M747.1 320.9 h3 v3 h-3 Z M747.2 225.9 h3 v3 h-3 Z M664.2 315.5 h3 v3 h-3 Z M696.4 330.8 h3 v3 h-3 Z M721.2 326.7 h3 v3 h-3 Z M747.1 320.9 h3 v3 h-3 Z M772.9 326.7 h3 v3 h-3 Z M799.8 331.7 h3 v3 h-3 Z M833.3 315.0 h3 v3 h-3 Z M671.0 356.5 h3 v3 h-3 Z M696.4 361.8 h3 v3 h-3 Z M721.2 358.5 h3 v3 h-3 Z M747.1 354.4 h3 v3 h-3 Z M773.9 359.8 h3 v3 h-3 Z M799.8 362.7 h3 v3 h-3 Z M826.6 357.7 h3 v3 h-3 Z M680.9 390.8 h3 v3 h-3 Z M697.4 397.0 h3 v3 h-3 Z M722.2 387.5 h3 v3 h-3 Z M747.1 385.6 h3 v3 h-3 Z M772.9 388.7 h3 v3 h-3 Z M798.7 397.8 h3 v3 h-3 Z M815.7 391.6 h3 v3 h-3 Z M684.0 425.9 h3 v3 h-3 Z M701.2 432.1 h3 v3 h-3 Z M724.7 432.1 h3 v3 h-3 Z M747.1 432.9 h3 v3 h-3 Z M770.8 432.1 h3 v3 h-3 Z M795.0 432.9 h3 v3 h-3 Z M814.2 426.7 h3 v3 h-3 Z M684.0 442.9 h3 v3 h-3 Z M699.9 449.1 h3 v3 h-3 Z M724.7 449.1 h3 v3 h-3 Z M747.1 454.2 h3 v3 h-3 Z M769.8 450.1 h3 v3 h-3 Z M796.3 449.1 h3 v3 h-3 Z M814.2 443.9 h3 v3 h-3 Z M681.9 461.1 h3 v3 h-3 Z M697.4 465.2 h3 v3 h-3 Z M724.7 466.0 h3 v3 h-3 Z M747.1 472.8 h3 v3 h-3 Z M769.8 467.3 h3 v3 h-3 Z M798.3 465.2 h3 v3 h-3 Z M815.3 461.9 h3 v3 h-3 Z M679.9 471.8 h3 v3 h-3 Z M697.0 477.0 h3 v3 h-3 Z M724.7 478.0 h3 v3 h-3 Z M747.1 483.2 h3 v3 h-3 Z M769.8 478.0 h3 v3 h-3 Z M798.7 477.0 h3 v3 h-3 Z M816.9 472.8 h3 v3 h-3 Z M679.9 471.8 h3 v3 h-3 Z M697.0 477.0 h3 v3 h-3 Z M724.7 478.0 h3 v3 h-3 Z M747.1 483.2 h3 v3 h-3 Z M677.1 503.6 h3 v3 h-3 Z M691.6 509.8 h3 v3 h-3 Z M730.8 510.9 h3 v3 h-3 Z M744.3 503.6 h3 v3 h-3 Z M674.6 536.7 h3 v3 h-3 Z M691.6 539.8 h3 v3 h-3 Z M730.8 540.8 h3 v3 h-3 Z M745.3 537.7 h3 v3 h-3 Z M678.1 579.1 h3 v3 h-3 Z M693.6 586.3 h3 v3 h-3 Z M729.8 587.9 h3 v3 h-3 Z M743.2 578.0 h3 v3 h-3 Z M693.6 618.3 h3 v3 h-3 Z M699.8 620.4 h3 v3 h-3 Z M723.6 620.4 h3 v3 h-3 Z M732.9 615.2 h3 v3 h-3 Z M695.4 630.6 h3 v3 h-3 Z M701.6 631.6 h3 v3 h-3 Z M721.2 631.6 h3 v3 h-3 Z M729.5 630.6 h3 v3 h-3 Z M697.4 639.9 h3 v3 h-3 Z M702.6 640.9 h3 v3 h-3 Z M721.2 640.9 h3 v3 h-3 Z M728.5 639.9 h3 v3 h-3 Z M699.5 651.2 h3 v3 h-3 Z M704.7 655.4 h3 v3 h-3 Z M722.2 655.4 h3 v3 h-3 Z M727.4 649.2 h3 v3 h-3 Z M696.4 664.7 h3 v3 h-3 Z M702.6 670.9 h3 v3 h-3 Z M723.3 670.9 h3 v3 h-3 Z M730.5 664.7 h3 v3 h-3 Z M691.2 687.4 h3 v3 h-3 Z M700.5 687.4 h3 v3 h-3 Z M725.3 687.4 h3 v3 h-3 Z M736.7 686.4 h3 v3 h-3 Z M691.2 710.2 h3 v3 h-3 Z M700.5 713.3 h3 v3 h-3 Z M726.4 713.3 h3 v3 h-3 Z M736.7 708.1 h3 v3 h-3 Z M697.4 737.0 h3 v3 h-3 Z M704.7 741.2 h3 v3 h-3 Z M722.2 741.2 h3 v3 h-3 Z M730.5 737.0 h3 v3 h-3 Z M699.5 753.6 h3 v3 h-3 Z M705.7 756.7 h3 v3 h-3 Z M721.2 756.7 h3 v3 h-3 Z M729.5 753.6 h3 v3 h-3 Z M699.5 769.1 h3 v3 h-3 Z M705.7 771.1 h3 v3 h-3 Z M722.2 771.1 h3 v3 h-3 Z M730.5 769.1 h3 v3 h-3 Z M698.5 784.6 h3 v3 h-3 Z M704.7 787.7 h3 v3 h-3 Z M722.2 787.7 h3 v3 h-3 Z M731.5 784.6 h3 v3 h-3 Z M693.3 800.1 h3 v3 h-3 Z M701.6 802.1 h3 v3 h-3 Z M723.3 803.2 h3 v3 h-3 Z M737.8 800.1 h3 v3 h-3 Z M693.3 810.4 h3 v3 h-3 Z M700.5 813.5 h3 v3 h-3 Z M724.3 813.5 h3 v3 h-3 Z M738.8 808.3 h3 v3 h-3 Z M816.9 472.8 h3 v3 h-3 Z M798.7 477.0 h3 v3 h-3 Z M769.8 478.0 h3 v3 h-3 Z M750.5 486.5 h3 v3 h-3 Z M819.7 504.7 h3 v3 h-3 Z M803.2 510.9 h3 v3 h-3 Z M763.9 510.9 h3 v3 h-3 Z M752.5 503.6 h3 v3 h-3 Z M821.8 537.7 h3 v3 h-3 Z M803.2 540.8 h3 v3 h-3 Z M763.9 540.8 h3 v3 h-3 Z M751.5 537.7 h3 v3 h-3 Z M818.7 580.1 h3 v3 h-3 Z M800.1 587.9 h3 v3 h-3 Z M764.9 587.9 h3 v3 h-3 Z M753.6 578.0 h3 v3 h-3 Z M804.2 617.3 h3 v3 h-3 Z M794.9 621.0 h3 v3 h-3 Z M772.2 620.4 h3 v3 h-3 Z M764.9 614.2 h3 v3 h-3 Z M801.8 630.6 h3 v3 h-3 Z M794.6 631.6 h3 v3 h-3 Z M773.9 631.6 h3 v3 h-3 Z M767.7 630.6 h3 v3 h-3 Z M799.8 639.9 h3 v3 h-3 Z M793.6 640.9 h3 v3 h-3 Z M775.0 640.9 h3 v3 h-3 Z M769.8 639.9 h3 v3 h-3 Z M798.7 651.2 h3 v3 h-3 Z M792.5 656.4 h3 v3 h-3 Z M775.0 656.4 h3 v3 h-3 Z M770.8 650.2 h3 v3 h-3 Z M800.8 664.7 h3 v3 h-3 Z M793.6 671.9 h3 v3 h-3 Z M773.9 671.9 h3 v3 h-3 Z M767.7 665.7 h3 v3 h-3 Z M804.9 687.4 h3 v3 h-3 Z M795.6 687.4 h3 v3 h-3 Z M770.8 687.4 h3 v3 h-3 Z M761.5 687.4 h3 v3 h-3 Z M806.0 709.1 h3 v3 h-3 Z M794.6 713.3 h3 v3 h-3 Z M769.8 713.3 h3 v3 h-3 Z M761.5 711.2 h3 v3 h-3 Z M799.8 738.1 h3 v3 h-3 Z M792.5 741.2 h3 v3 h-3 Z M773.9 741.2 h3 v3 h-3 Z M765.7 738.1 h3 v3 h-3 Z M797.7 754.6 h3 v3 h-3 Z M791.5 756.7 h3 v3 h-3 Z M775.0 756.7 h3 v3 h-3 Z M767.7 754.6 h3 v3 h-3 Z M798.7 769.1 h3 v3 h-3 Z M791.5 771.1 h3 v3 h-3 Z M775.0 771.1 h3 v3 h-3 Z M767.7 769.1 h3 v3 h-3 Z M799.8 785.6 h3 v3 h-3 Z M792.5 787.7 h3 v3 h-3 Z M773.9 787.7 h3 v3 h-3 Z M766.7 785.6 h3 v3 h-3 Z M803.9 800.1 h3 v3 h-3 Z M793.6 803.2 h3 v3 h-3 Z M770.8 802.1 h3 v3 h-3 Z M761.5 800.1 h3 v3 h-3 Z M804.9 810.4 h3 v3 h-3 Z M794.6 813.5 h3 v3 h-3 Z M771.9 813.5 h3 v3 h-3 Z M760.5 809.4 h3 v3 h-3 Z M639.8 246.9 h3 v3 h-3 Z M639.1 263.2 h3 v3 h-3 Z M637.5 283.8 h3 v3 h-3 Z M641.4 305.9 h3 v3 h-3 Z M592.0 246.8 h3 v3 h-3 Z M593.7 261.0 h3 v3 h-3 Z M592.6 282.7 h3 v3 h-3 Z M596.6 303.8 h3 v3 h-3 Z M542.4 253.0 h3 v3 h-3 Z M544.1 262.7 h3 v3 h-3 Z M545.8 281.0 h3 v3 h-3 Z M544.7 297.5 h3 v3 h-3 Z M539.0 253.0 h3 v3 h-3 Z M540.1 262.1 h3 v3 h-3 Z M537.9 281.0 h3 v3 h-3 Z M540.1 297.5 h3 v3 h-3 Z M516.2 249.3 h3 v3 h-3 Z M519.6 261.6 h3 v3 h-3 Z M523.0 286.1 h3 v3 h-3 Z M521.9 297.5 h3 v3 h-3 Z M489.3 253.7 h3 v3 h-3 Z M487.3 267.9 h3 v3 h-3 Z M485.7 289.7 h3 v3 h-3 Z M486.8 299.8 h3 v3 h-3 Z M451.8 259.8 h3 v3 h-3 Z M450.8 264.9 h3 v3 h-3 Z M449.8 283.6 h3 v3 h-3 Z M449.8 293.8 h3 v3 h-3 Z M364.3 268.6 h3 v3 h-3 Z M366.8 266.3 h3 v3 h-3 Z M381.4 262.5 h3 v3 h-3 Z M396.0 260.6 h3 v3 h-3 Z M411.8 258.4 h3 v3 h-3 Z M427.0 258.7 h3 v3 h-3 Z M444.2 259.7 h3 v3 h-3 Z M451.8 259.8 h3 v3 h-3 Z M365.3 270.8 h3 v3 h-3 Z M382.0 268.9 h3 v3 h-3 Z M396.9 267.6 h3 v3 h-3 Z M411.2 267.6 h3 v3 h-3 Z M423.9 267.9 h3 v3 h-3 Z M441.0 267.0 h3 v3 h-3 Z M450.8 264.9 h3 v3 h-3 Z M368.7 283.8 h3 v3 h-3 Z M377.6 281.9 h3 v3 h-3 Z M392.8 277.7 h3 v3 h-3 Z M407.1 275.5 h3 v3 h-3 Z M377.6 290.7 h3 v3 h-3 Z M391.9 289.8 h3 v3 h-3 Z M406.8 290.1 h3 v3 h-3 Z M379.5 299.0 h3 v3 h-3 Z M393.8 299.6 h3 v3 h-3 Z M407.1 299.6 h3 v3 h-3 Z M426.7 286.9 h3 v3 h-3 Z M430.8 294.9 h3 v3 h-3 Z M858.5 248.0 h3 v3 h-3 Z M857.7 264.0 h3 v3 h-3 Z M858.5 284.5 h3 v3 h-3 Z M855.4 306.6 h3 v3 h-3 Z M906.2 248.5 h3 v3 h-3 Z M904.5 262.7 h3 v3 h-3 Z M905.6 284.4 h3 v3 h-3 Z M901.6 305.4 h3 v3 h-3 Z M955.8 255.5 h3 v3 h-3 Z M954.1 265.2 h3 v3 h-3 Z M952.4 283.5 h3 v3 h-3 Z M953.5 300.0 h3 v3 h-3 Z M959.2 255.6 h3 v3 h-3 Z M958.1 264.6 h3 v3 h-3 Z M960.3 283.6 h3 v3 h-3 Z M958.1 300.0 h3 v3 h-3 Z M982.0 252.2 h3 v3 h-3 Z M978.6 264.5 h3 v3 h-3 Z M975.2 288.9 h3 v3 h-3 Z M976.3 300.3 h3 v3 h-3 Z M1008.9 257.1 h3 v3 h-3 Z M1010.9 271.3 h3 v3 h-3 Z M1012.5 293.1 h3 v3 h-3 Z M1011.4 303.2 h3 v3 h-3 Z M1046.4 263.8 h3 v3 h-3 Z M1047.4 268.9 h3 v3 h-3 Z M1048.4 287.6 h3 v3 h-3 Z M1048.4 297.8 h3 v3 h-3 Z M1133.9 274.0 h3 v3 h-3 Z M1131.4 271.6 h3 v3 h-3 Z M1116.8 267.6 h3 v3 h-3 Z M1102.2 265.4 h3 v3 h-3 Z M1086.4 263.0 h3 v3 h-3 Z M1071.2 263.1 h3 v3 h-3 Z M1054.0 263.8 h3 v3 h-3 Z M1046.4 263.8 h3 v3 h-3 Z M1132.9 276.1 h3 v3 h-3 Z M1116.2 274.0 h3 v3 h-3 Z M1101.3 272.4 h3 v3 h-3 Z M1087.0 272.2 h3 v3 h-3 Z M1074.3 272.3 h3 v3 h-3 Z M1057.2 271.1 h3 v3 h-3 Z M1047.4 268.9 h3 v3 h-3 Z M1129.5 289.1 h3 v3 h-3 Z M1120.6 287.0 h3 v3 h-3 Z M1105.4 282.6 h3 v3 h-3 Z M1091.1 280.2 h3 v3 h-3 Z M1120.6 295.8 h3 v3 h-3 Z M1106.3 294.7 h3 v3 h-3 Z M1091.4 294.8 h3 v3 h-3 Z M1118.7 304.1 h3 v3 h-3 Z M1104.4 304.5 h3 v3 h-3 Z M1091.1 304.3 h3 v3 h-3 Z M1071.5 291.3 h3 v3 h-3 Z M1067.4 299.2 h3 v3 h-3 Z M707.6 113.4 h3 v3 h-3 Z M707.6 113.4 h3 v3 h-3 Z M726.7 110.3 h3 v3 h-3 Z M736.6 111.5 h3 v3 h-3 Z M747.9 112.7 h3 v3 h-3 Z M756.4 112.0 h3 v3 h-3 Z M769.9 111.3 h3 v3 h-3 Z M789.0 113.4 h3 v3 h-3 Z M789.0 113.4 h3 v3 h-3 Z M699.1 121.9 h3 v3 h-3 Z M709.7 124.7 h3 v3 h-3 Z M726.7 122.6 h3 v3 h-3 Z M736.6 123.3 h3 v3 h-3 Z M746.5 123.3 h3 v3 h-3 Z M756.4 123.3 h3 v3 h-3 Z M767.7 122.6 h3 v3 h-3 Z M784.7 125.4 h3 v3 h-3 Z M800.3 127.6 h3 v3 h-3 Z M694.9 136.5 h3 v3 h-3 Z M714.7 133.9 h3 v3 h-3 Z M726.7 131.8 h3 v3 h-3 Z M736.6 131.8 h3 v3 h-3 Z M745.8 131.8 h3 v3 h-3 Z M755.7 131.8 h3 v3 h-3 Z M765.6 133.2 h3 v3 h-3 Z M778.4 133.9 h3 v3 h-3 Z M796.0 138.9 h3 v3 h-3 Z M694.9 146.0 h3 v3 h-3 Z M709.0 145.2 h3 v3 h-3 Z M726.0 147.4 h3 v3 h-3 Z M735.9 146.7 h3 v3 h-3 Z M746.5 147.4 h3 v3 h-3 Z M755.7 146.7 h3 v3 h-3 Z M767.0 146.7 h3 v3 h-3 Z M784.7 145.2 h3 v3 h-3 Z M802.4 146.0 h3 v3 h-3 Z M697.7 157.3 h3 v3 h-3 Z M706.9 156.6 h3 v3 h-3 Z M723.9 160.1 h3 v3 h-3 Z M734.5 160.8 h3 v3 h-3 Z M745.8 161.5 h3 v3 h-3 Z M757.1 160.8 h3 v3 h-3 Z M767.7 160.8 h3 v3 h-3 Z M786.1 158.0 h3 v3 h-3 Z M798.9 162.9 h3 v3 h-3 Z M704.1 179.9 h3 v3 h-3 Z M707.6 173.5 h3 v3 h-3 Z M724.6 179.9 h3 v3 h-3 Z M732.4 180.6 h3 v3 h-3 Z M745.8 180.6 h3 v3 h-3 Z M757.8 180.6 h3 v3 h-3 Z M767.0 179.9 h3 v3 h-3 Z M784.7 173.5 h3 v3 h-3 Z M793.9 182.7 h3 v3 h-3 Z M707.6 191.2 h3 v3 h-3 Z M714.0 191.2 h3 v3 h-3 Z M714.0 191.2 h3 v3 h-3 Z M730.2 188.4 h3 v3 h-3 Z M745.8 188.1 h3 v3 h-3 Z M760.0 188.4 h3 v3 h-3 Z M777.6 191.9 h3 v3 h-3 Z M777.6 191.9 h3 v3 h-3 Z M790.5 192.5 h3 v3 h-3 Z M711.8 202.6 h3 v3 h-3 Z M720.3 197.6 h3 v3 h-3 Z M720.3 197.6 h3 v3 h-3 Z M731.7 197.6 h3 v3 h-3 Z M745.1 201.1 h3 v3 h-3 Z M757.1 197.6 h3 v3 h-3 Z M769.2 197.6 h3 v3 h-3 Z M786.1 194.8 h3 v3 h-3 Z M787.6 202.6 h3 v3 h-3 Z M716.8 215.3 h3 v3 h-3 Z M716.8 215.3 h3 v3 h-3 Z M716.8 215.3 h3 v3 h-3 Z M731.0 216.7 h3 v3 h-3 Z M745.1 218.8 h3 v3 h-3 Z M759.3 216.7 h3 v3 h-3 Z M779.1 215.3 h3 v3 h-3 Z M779.1 215.3 h3 v3 h-3 Z M779.1 215.3 h3 v3 h-3 Z M716.8 215.3 h3 v3 h-3 Z M716.8 215.3 h3 v3 h-3 Z M726.7 221.0 h3 v3 h-3 Z M726.7 221.0 h3 v3 h-3 Z M745.1 225.2 h3 v3 h-3 Z M767.7 221.0 h3 v3 h-3 Z M767.7 221.0 h3 v3 h-3 Z M779.1 215.3 h3 v3 h-3 Z M779.1 215.3 h3 v3 h-3 Z" fill="#000"/>
<circle cx="749.5" cy="150.5" r="2.6" fill="#f2a24a" stroke="#a05a10" stroke-width="0.5"/>
<circle cx="1182.5" cy="290.5" r="10" fill="none" stroke="#fff" stroke-width="1.2" />
<circle cx="1182.5" cy="290.5" r="10" fill="none" stroke="#f00" stroke-width="1.2" stroke-dasharray="4 4"/>
<path d="M1182.5 271 V286 M1182.5 295 V311 M1162 290.5 H1177 M1187 290.5 H1202" stroke="#000" stroke-width="1.2"/>
<path d="M29 836 V861" stroke="#0000dd" stroke-width="2"/>
<path d="M29 861 H54" stroke="#dd0000" stroke-width="2"/>
<path d="M30.5 857 V860" stroke="#00cc00" stroke-width="1"/>
<text x='31' y='834' font-family='Liberation Sans' font-size='11' fill='#0000e0'>z</text>
<text x='32' y='855' font-family='Liberation Sans' font-size='11' fill='#00b000'>y</text>
<text x='56' y='859' font-family='Liberation Sans' font-size='11' fill='#d00000'>x</text>
<path d="M1563 32 L1570 39 M1566 32 L1570 36" stroke="#999" stroke-width="1"/>
<path d="M9 26 L13 30 M9 29 L10 30" stroke="#999" stroke-width="1"/>
<path d="M9 907 L13 911" stroke="#999" stroke-width="1"/>
<rect x="1563" y="52" width="10" height="14" rx="3" fill="#333"/><path d="M1565 59 H1570 M1567.5 56.5 V61.5" stroke="#888" stroke-width="1.3"/>
<rect x="4" y="52" width="10" height="14" rx="3" fill="#333"/><path d="M9 59 H13 M11 56.5 V61.5" stroke="#777" stroke-width="1"/>
</svg>
<div style="position:absolute;left:9px;top:9px;width:1561px;height:21px;background:#727272;"></div>
<div style="position:absolute;left:12px;top:9px;width:29px;height:19px;background:linear-gradient(#484848,#3a3a3a);box-sizing:border-box;border:1px solid #2b2b2b;border-radius:4px;"></div>
<svg style="position:absolute;left:16px;top:11px" width="16" height="16"><circle cx="7" cy="7" r="6.2" fill="#35598f" stroke="#111" stroke-width="1"/><circle cx="7" cy="7" r="5" fill="none" stroke="#8aa5cc" stroke-width="0.8"/><rect x="5.8" y="3" width="2.4" height="1.8" fill="#fff"/><path d="M5 6 H8.2 V10 H9 V11.2 H5 V10 H5.8 V7.2 H5 Z" fill="#fff"/></svg>
<svg style="position:absolute;left:30px;top:11px" width="8" height="14"><path d="M0.5 6 L4 1 L7.5 6 Z M0.5 8 L4 13 L7.5 8 Z" fill="#9a9a9a"/></svg>
<div style="position:absolute;left:53px;top:13px;font-size:11px;line-height:12px;color:#000;white-space:pre;will-change:transform;">File</div>
<div style="position:absolute;left:91px;top:13px;font-size:11px;line-height:12px;color:#000;white-space:pre;will-change:transform;">Render</div>
<div style="position:absolute;left:147px;top:13px;font-size:11px;line-height:12px;color:#000;white-space:pre;will-change:transform;">Window</div>
<div style="position:absolute;left:206px;top:13px;font-size:11px;line-height:12px;color:#000;white-space:pre;will-change:transform;">Help</div>
<div style="position:absolute;left:242px;top:9px;width:32px;height:19px;background:linear-gradient(#484848,#3a3a3a);box-sizing:border-box;border:1px solid #2b2b2b;border-radius:4px 0 0 4px;"></div>
<svg style="position:absolute;left:247px;top:11px" width="16" height="14"><rect x="1" y="1" width="5.5" height="5.5" fill="#ddd" stroke="#111"/><rect x="1" y="7" width="5.5" height="6" fill="#ddd" stroke="#111"/><rect x="7.5" y="1" width="6.5" height="12" fill="#ddd" stroke="#111"/></svg>
<svg style="position:absolute;left:263px;top:11px" width="8" height="14"><path d="M0.5 6 L4 1 L7.5 6 Z M0.5 8 L4 13 L7.5 8 Z" fill="#9a9a9a"/></svg>
<div style="position:absolute;left:273px;top:9px;width:120px;height:19px;background:linear-gradient(#a8a8a8,#989898);box-sizing:border-box;border:1px solid #2b2b2b;border-left:none;"></div>
<div style="position:absolute;left:282px;top:13px;font-size:11px;line-height:12px;color:#000;white-space:pre;will-change:transform;">Default</div>
<div style="position:absolute;left:392px;top:9px;width:22px;height:19px;background:linear-gradient(#a8a8a8,#989898);box-sizing:border-box;border:1px solid #2b2b2b;"></div>
<div style="position:absolute;left:413px;top:9px;width:21px;height:19px;background:linear-gradient(#a8a8a8,#989898);box-sizing:border-box;border:1px solid #2b2b2b;border-radius:0 4px 4px 0;"></div>
<svg style="position:absolute;left:0;top:0;overflow:visible" width="1" height="1"><path d="M399.2 18 H410.8 M405 12.2 V23.8" stroke="#111" stroke-width="4.2" fill="none"/><path d="M400.4 18 H409.6 M405 13.4 V22.6" stroke="#f4f4f4" stroke-width="2.2" fill="none"/></svg>
<svg style="position:absolute;left:0;top:0;overflow:visible" width="1" height="1"><path d="M417.8 12.8 L428.2 23.2 M428.2 12.8 L417.8 23.2" stroke="#111" stroke-width="4.4" fill="none"/><path d="M418.6 13.6 L427.4 22.4 M427.4 13.6 L418.6 22.4" stroke="#f4f4f4" stroke-width="2.4" fill="none"/></svg>
<div style="position:absolute;left:439px;top:9px;width:32px;height:19px;background:linear-gradient(#484848,#3a3a3a);box-sizing:border-box;border:1px solid #2b2b2b;border-radius:4px 0 0 4px;"></div>
<svg style="position:absolute;left:444px;top:10px" width="18" height="18"><circle cx="3" cy="3" r="2" fill="#e8e070"/><rect x="8" y="3.5" width="5" height="8" rx="2" fill="#8fb0dd" stroke="#111" stroke-width="0.8"/><circle cx="6" cy="12" r="3.5" fill="#eee" stroke="#111" stroke-width="0.8"/></svg>
<svg style="position:absolute;left:461px;top:11px" width="8" height="14"><path d="M0.5 6 L4 1 L7.5 6 Z M0.5 8 L4 13 L7.5 8 Z" fill="#9a9a9a"/></svg>
<div style="position:absolute;left:470px;top:9px;width:121px;height:19px;background:linear-gradient(#a8a8a8,#989898);box-sizing:border-box;border:1px solid #2b2b2b;border-left:none;"></div>
<div style="position:absolute;left:478px;top:13px;font-size:11px;line-height:12px;color:#000;white-space:pre;will-change:transform;">Scene</div>
<div style="position:absolute;left:590px;top:9px;width:21px;height:19px;background:linear-gradient(#a8a8a8,#989898);box-sizing:border-box;border:1px solid #2b2b2b;"></div>
<div style="position:absolute;left:610px;top:9px;width:21px;height:19px;background:linear-gradient(#a8a8a8,#989898);box-sizing:border-box;border:1px solid #2b2b2b;border-radius:0 4px 4px 0;"></div>
<svg style="position:absolute;left:0;top:0;overflow:visible" width="1" height="1"><path d="M596.2 18 H607.8 M602 12.2 V23.8" stroke="#111" stroke-width="4.2" fill="none"/><path d="M597.4 18 H606.6 M602 13.4 V22.6" stroke="#f4f4f4" stroke-width="2.2" fill="none"/></svg>
<svg style="position:absolute;left:0;top:0;overflow:visible" width="1" height="1"><path d="M615.8 12.8 L626.2 23.2 M626.2 12.8 L615.8 23.2" stroke="#111" stroke-width="4.4" fill="none"/><path d="M616.6 13.6 L625.4 22.4 M625.4 13.6 L616.6 22.4" stroke="#f4f4f4" stroke-width="2.4" fill="none"/></svg>
<div style="position:absolute;left:647px;top:9px;width:111px;height:19px;background:linear-gradient(#484848,#3a3a3a);box-sizing:border-box;border:1px solid #2b2b2b;border-radius:4px;"></div>
<div style="position:absolute;left:655px;top:13px;font-size:11px;line-height:12px;color:#e6e6e6;white-space:pre;will-change:transform;">Cycles Render</div>
<svg style="position:absolute;left:747px;top:11px" width="8" height="14"><path d="M0.5 6 L4 1 L7.5 6 Z M0.5 8 L4 13 L7.5 8 Z" fill="#cfcfcf"/></svg>
<svg style="position:absolute;left:776px;top:11px" width="18" height="15"><path d="M1 9 L7 4 L4.5 4 L7 2 L11 2 A6 5.5 0 1 1 5.5 12.5 Z" fill="#f08a1c" stroke="#111" stroke-width="0.9"/><circle cx="11" cy="8" r="3" fill="#fff" stroke="#111" stroke-width="0.6"/><circle cx="11" cy="8" r="1.6" fill="#2c5fa0"/></svg>
<div style="position:absolute;left:802px;top:13px;font-size:11px;line-height:12px;color:#000;white-space:pre;will-change:transform;letter-spacing:0.2px;">v2.71 | Verts:0/503 | Edges:0/979 | Faces:0/477 | Tris:952 | Mem:15.29M | Cube</div>
<div style="position:absolute;left:9px;top:30px;width:1561px;height:1px;background:#000;"></div>
<div style="position:absolute;left:9px;top:887px;width:1561px;height:24px;background:#727272;"></div>
<div style="position:absolute;left:9px;top:887px;width:1561px;height:1px;background:#808080;"></div>
<div style="position:absolute;left:13px;top:890px;width:29px;height:20px;background:linear-gradient(#484848,#3a3a3a);box-sizing:border-box;border:1px solid #2b2b2b;border-radius:4px;"></div>
<svg style="position:absolute;left:16px;top:892px" width="16" height="17"><path d="M2 4 L8 1.5 L14 4 L14 12 L8 15.5 L2 12 Z" fill="#eee" stroke="#111" stroke-width="1.2"/><path d="M8 6.5 L14 4 L14 12 L8 15.5 Z" fill="#888"/><path d="M2 4 L8 6.5 L14 4" fill="none" stroke="#bbb" stroke-width="0.6"/></svg>
<svg style="position:absolute;left:32px;top:893px" width="8" height="14"><path d="M0.5 6 L4 1 L7.5 6 Z M0.5 8 L4 13 L7.5 8 Z" fill="#9a9a9a"/></svg>
<div style="position:absolute;left:55px;top:895px;font-size:11px;line-height:12px;color:#000;white-space:pre;will-change:transform;">View</div>
<div style="position:absolute;left:99px;top:895px;font-size:11px;line-height:12px;color:#000;white-space:pre;will-change:transform;">Select</div>
<div style="position:absolute;left:150px;top:895px;font-size:11px;line-height:12px;color:#000;white-space:pre;will-change:transform;">Add</div>
<div style="position:absolute;left:189px;top:895px;font-size:11px;line-height:12px;color:#000;white-space:pre;will-change:transform;">Mesh</div>
<div style="position:absolute;left:228px;top:890px;width:99px;height:20px;background:linear-gradient(#484848,#3a3a3a);box-sizing:border-box;border:1px solid #2b2b2b;border-radius:4px;"></div>
<svg style="position:absolute;left:232px;top:892px" width="16" height="16"><path d="M4 3 L9 1.5 L13 3 L13 11 L8 13 L4 11 Z" fill="#aaa" stroke="#111" stroke-width="0.8"/><rect x="2.5" y="2" width="3" height="3" fill="#222" stroke="#f5a030" stroke-width="0.8"/><rect x="10" y="5.5" width="3" height="3" fill="#222" stroke="#f5a030" stroke-width="0.8"/><rect x="6.5" y="11" width="3" height="3" fill="#222" stroke="#f5a030" stroke-width="0.8"/></svg>
<div style="position:absolute;left:252px;top:895px;font-size:11px;line-height:12px;color:#e6e6e6;white-space:pre;will-change:transform;">Edit Mode</div>
<svg style="position:absolute;left:316px;top:893px" width="8" height="14"><path d="M0.5 6 L4 1 L7.5 6 Z M0.5 8 L4 13 L7.5 8 Z" fill="#cfcfcf"/></svg>
<div style="position:absolute;left:333px;top:890px;width:34px;height:20px;background:linear-gradient(#484848,#3a3a3a);box-sizing:border-box;border:1px solid #2b2b2b;border-radius:4px;"></div>
<div style="position:absolute;left:372px;top:890px;width:35px;height:20px;background:linear-gradient(#484848,#3a3a3a);box-sizing:border-box;border:1px solid #2b2b2b;border-radius:4px;"></div>
<svg style="position:absolute;left:0;top:0;overflow:visible" width="1" height="1"><defs><radialGradient id="sph" cx="0.35" cy="0.3" r="0.8"><stop offset="0" stop-color="#ffffff"/><stop offset="0.55" stop-color="#e6e6e6"/><stop offset="1" stop-color="#8a8a8a"/></radialGradient></defs><circle cx="344.2" cy="899.7" r="6.2" fill="url(#sph)" stroke="#1a1a1a" stroke-width="0.9"/><circle cx="380.8" cy="897.2" r="3.9" fill="url(#sph)" stroke="#1a1a1a" stroke-width="0.8"/><circle cx="386.2" cy="902.6" r="3.9" fill="url(#sph)" stroke="#1a1a1a" stroke-width="0.8"/><rect x="381.6" y="898.5" width="2.8" height="2.8" fill="#fff" stroke="#1060e0" stroke-width="0.9"/></svg>
<svg style="position:absolute;left:356px;top:893px" width="8" height="14"><path d="M0.5 6 L4 1 L7.5 6 Z M0.5 8 L4 13 L7.5 8 Z" fill="#9a9a9a"/></svg>
<svg style="position:absolute;left:396px;top:893px" width="8" height="14"><path d="M0.5 6 L4 1 L7.5 6 Z M0.5 8 L4 13 L7.5 8 Z" fill="#9a9a9a"/></svg>
<div style="position:absolute;left:412px;top:890px;width:81px;height:20px;background:linear-gradient(#484848,#3a3a3a);box-sizing:border-box;border:1px solid #2b2b2b;border-radius:4px;"></div>
<div style="position:absolute;left:432px;top:891px;width:20px;height:18px;background:#5680c2;"></div>
<svg style="position:absolute;left:0;top:0;overflow:visible" width="1" height="1"><path d="M421.8 902.1 V894 M421.8 902.1 L416 906.2 M421.8 902.1 L428 906.2" stroke="#111" stroke-width="3.2" stroke-linecap="round"/><path d="M421.8 902.1 V894" stroke="#5a8ae0" stroke-width="1.8" stroke-linecap="round"/><path d="M421.8 902.1 L416 906.2" stroke="#d83a2a" stroke-width="1.8" stroke-linecap="round"/><path d="M421.8 902.1 L428 906.2" stroke="#4ac040" stroke-width="1.8" stroke-linecap="round"/><path d="M435.8 905.3 L443 898" stroke="#1a2a50" stroke-width="3.4" stroke-linecap="round"/><path d="M435.8 905.3 L443 898" stroke="#9cc0f8" stroke-width="1.6" stroke-linecap="round"/><path d="M446.8 894.2 L446 901.5 L439.5 895 Z" fill="#9cc0f8" stroke="#1a2a50" stroke-width="0.9" stroke-linejoin="round"/><path d="M455.9 905.6 Q457 896.5 466.8 895.2" fill="none" stroke="#1a2a40" stroke-width="3.2" stroke-linecap="round"/><path d="M455.9 905.6 Q457 896.5 466.8 895.2" fill="none" stroke="#4a6a9a" stroke-width="1.8" stroke-linecap="round"/><path d="M475.8 905.2 L481 900" stroke="#1a2a40" stroke-width="3" stroke-linecap="round"/><path d="M475.8 905.2 L481 900" stroke="#4a6a9a" stroke-width="1.6" stroke-linecap="round"/><rect x="480" y="893.6" width="7.4" height="7.2" fill="#4a6a9a" stroke="#1a2a40" stroke-width="0.9"/></svg>
<div style="position:absolute;left:492px;top:890px;width:73px;height:20px;background:linear-gradient(#484848,#3a3a3a);box-sizing:border-box;border:1px solid #2b2b2b;border-radius:0 4px 4px 0;"></div>
<div style="position:absolute;left:499px;top:895px;font-size:11px;line-height:12px;color:#e6e6e6;white-space:pre;will-change:transform;">Global</div>
<svg style="position:absolute;left:554px;top:893px" width="8" height="14"><path d="M0.5 6 L4 1 L7.5 6 Z M0.5 8 L4 13 L7.5 8 Z" fill="#cfcfcf"/></svg>
<div style="position:absolute;left:569px;top:890px;width:20px;height:20px;background:linear-gradient(#484848,#3a3a3a);box-sizing:border-box;border:1px solid #2b2b2b;border-radius:4px 0 0 4px;"></div>
<div style="position:absolute;left:588px;top:890px;width:21px;height:20px;background:linear-gradient(#a6a6a6,#9a9a9a);box-sizing:border-box;border:1px solid #2b2b2b;"></div>
<div style="position:absolute;left:608px;top:890px;width:21px;height:20px;background:linear-gradient(#a6a6a6,#9a9a9a);box-sizing:border-box;border:1px solid #2b2b2b;border-radius:0 4px 4px 0;"></div>
<svg style="position:absolute;left:0;top:0;overflow:visible" width="1" height="1"><path d="M579.4 893.5 L585.1999999999999 896.3 L585.1999999999999 903.7 L579.4 906.9 L573.4 903.7 L573.4 896.3 Z" fill="#bdbdbd" stroke="#3a3a3a" stroke-width="0.9"/><path d="M579.4 893.5 L585.1999999999999 896.3 L579.4 899.2 L573.4 896.3 Z" fill="#d8d8d8"/><path d="M579.4 899.2 L585.1999999999999 896.3 L585.1999999999999 903.7 L579.4 906.9 Z" fill="#8c8c8c"/><circle cx="574" cy="895.8" r="1.9" fill="#f0a030" stroke="#6a3a00" stroke-width="0.8"/><path d="M600 893.5 L605.8 896.3 L605.8 903.7 L600 906.9 L594 903.7 L594 896.3 Z" fill="#bdbdbd" stroke="#3a3a3a" stroke-width="0.9"/><path d="M600 893.5 L605.8 896.3 L600 899.2 L594 896.3 Z" fill="#d8d8d8"/><path d="M600 899.2 L605.8 896.3 L605.8 903.7 L600 906.9 Z" fill="#8c8c8c"/><rect x="591.3" y="895.3" width="2.6" height="8.6" fill="#e8c090" stroke="#8a6030" stroke-width="0.6"/><path d="M620.5 893.5 L626.3 896.3 L626.3 903.7 L620.5 906.9 L614.5 903.7 L614.5 896.3 Z" fill="#bdbdbd" stroke="#3a3a3a" stroke-width="0.9"/><path d="M620.5 893.5 L626.3 896.3 L620.5 899.2 L614.5 896.3 Z" fill="#d8d8d8"/><path d="M620.5 899.2 L626.3 896.3 L626.3 903.7 L620.5 906.9 Z" fill="#8c8c8c"/><path d="M612.2 895.6 L618.5 897.8 L618.5 906.4 L612.2 904.1 Z" fill="#e0b888" stroke="#8a6030" stroke-width="0.7"/></svg>
<div style="position:absolute;left:634px;top:890px;width:20px;height:20px;background:linear-gradient(#484848,#3a3a3a);box-sizing:border-box;border:1px solid #2b2b2b;border-radius:4px;"></div>
<svg style="position:absolute;left:0;top:0;overflow:visible" width="1" height="1"><path d="M641.9 893.8 H649.9 V902.1" fill="none" stroke="#bbb" stroke-width="1.2"/><circle cx="641.9" cy="893.8" r="1.3" fill="#ccc" stroke="#222" stroke-width="0.6"/><circle cx="649.9" cy="893.8" r="1.3" fill="#ccc" stroke="#222" stroke-width="0.6"/><circle cx="649.9" cy="902.1" r="1.3" fill="#ccc" stroke="#222" stroke-width="0.6"/><rect x="638.2" y="897.8" width="7.9" height="8" fill="#cfcfcf" stroke="#222" stroke-width="0.7"/><circle cx="638.2" cy="897.8" r="1.8" fill="#fff" stroke="#111" stroke-width="0.8"/><circle cx="646.1" cy="897.8" r="1.8" fill="#fff" stroke="#111" stroke-width="0.8"/><circle cx="638.2" cy="905.8" r="1.8" fill="#fff" stroke="#111" stroke-width="0.8"/><circle cx="646.1" cy="905.8" r="1.8" fill="#fff" stroke="#111" stroke-width="0.8"/></svg>
<div style="position:absolute;left:659px;top:890px;width:35px;height:20px;background:linear-gradient(#484848,#3a3a3a);box-sizing:border-box;border:1px solid #2b2b2b;border-radius:4px;"></div>
<svg style="position:absolute;left:664px;top:893px" width="14" height="14"><circle cx="7" cy="7" r="5.5" fill="#6a6a6a" stroke="#444"/><circle cx="7" cy="7" r="3" fill="#777" stroke="#555"/></svg>
<svg style="position:absolute;left:683px;top:893px" width="8" height="14"><path d="M0.5 6 L4 1 L7.5 6 Z M0.5 8 L4 13 L7.5 8 Z" fill="#9a9a9a"/></svg>
<div style="position:absolute;left:699px;top:890px;width:20px;height:20px;background:linear-gradient(#a6a6a6,#9a9a9a);box-sizing:border-box;border:1px solid #2b2b2b;border-radius:4px 0 0 4px;"></div>
<svg style="position:absolute;left:701px;top:892px" width="16" height="16"><path d="M11 3 L6 8 A2.2 2.2 0 0 0 9 11 L14 6" stroke="#444" stroke-width="4.5" fill="none"/><path d="M11 3 L6 8 A2.2 2.2 0 0 0 9 11 L14 6" stroke="#ccc" stroke-width="2.5" fill="none"/></svg>
<div style="position:absolute;left:718px;top:890px;width:36px;height:20px;background:linear-gradient(#484848,#3a3a3a);box-sizing:border-box;border:1px solid #2b2b2b;border-radius:0 4px 4px 0;"></div>
<svg style="position:absolute;left:721px;top:892px" width="16" height="16"><path d="M2 9 H15 M2 13 H15 M6 5 V16 M11 5 V16" stroke="#eee" stroke-width="1.2"/><circle cx="5" cy="5" r="3.2" fill="#fff" stroke="#333" stroke-width="0.6"/><circle cx="5" cy="5" r="1.8" fill="#2a7de0"/></svg>
<svg style="position:absolute;left:743px;top:893px" width="8" height="14"><path d="M0.5 6 L4 1 L7.5 6 Z M0.5 8 L4 13 L7.5 8 Z" fill="#9a9a9a"/></svg>
<div style="position:absolute;left:760px;top:890px;width:19px;height:20px;background:linear-gradient(#a6a6a6,#9a9a9a);box-sizing:border-box;border:1px solid #2b2b2b;border-radius:4px;"></div>
<svg style="position:absolute;left:761px;top:892px" width="16" height="16"><path d="M2 14 L7 9 M14 2 L9 7" stroke="#eee" stroke-width="1.5"/><path d="M7 9 L4 9 M7 9 L7 12 M9 7 L12 7 M9 7 L9 4" stroke="#eee" stroke-width="1.3"/><circle cx="2.5" cy="13.5" r="1.5" fill="#f5a030"/><circle cx="13.5" cy="2.5" r="1.5" fill="#f5a030"/></svg>
<div style="position:absolute;left:784px;top:890px;width:20px;height:20px;background:linear-gradient(#a6a6a6,#9a9a9a);box-sizing:border-box;border:1px solid #2b2b2b;border-radius:4px 0 0 4px;"></div>
<div style="position:absolute;left:803px;top:890px;width:21px;height:20px;background:linear-gradient(#a6a6a6,#9a9a9a);box-sizing:border-box;border:1px solid #2b2b2b;border-radius:0 4px 4px 0;"></div>
<svg style="position:absolute;left:0;top:0;overflow:visible" width="1" height="1"><rect x="786.8" y="895" width="13" height="11.3" rx="1" fill="#e8e8e8" stroke="#111" stroke-width="1"/><rect x="787.3" y="899.5" width="12" height="6.3" fill="#3a3a3a"/><circle cx="794.3" cy="901.9" r="3.6" fill="#eee" stroke="#111" stroke-width="0.6"/><circle cx="794.3" cy="901.9" r="2.6" fill="#6a2a20"/><circle cx="793.6" cy="901.2" r="1.2" fill="#3a5a9a"/><circle cx="789.4" cy="898.4" r="0.8" fill="#f00"/><circle cx="798.6" cy="895.5" r="3" fill="#d8b830"/><path d="M798.6 893 V898 M796.1 895.5 H801.1" stroke="#fff" stroke-width="1.2"/><rect x="806.4" y="899.4" width="13" height="8.2" fill="#555" stroke="#111" stroke-width="1"/><path d="M807 900.8 H819" stroke="#fff" stroke-width="1.2" stroke-dasharray="2 1.6"/><path d="M806.3 897.5 L818.6 893.4" stroke="#111" stroke-width="3"/><path d="M806.3 897.5 L818.6 893.4" stroke="#fff" stroke-width="1.4" stroke-dasharray="2 1.6"/><path d="M806.8 896.5 V901" stroke="#0a2050" stroke-width="2.4"/><path d="M806.8 897 V900.5" stroke="#a8c8f0" stroke-width="1.2"/></svg>
<div style="position:absolute;left:23px;top:42px;font-size:11px;line-height:12px;color:#f0f0f0;white-space:pre;will-change:transform;">User Ortho</div>
<div style="position:absolute;left:74px;top:867px;font-size:11px;line-height:12px;color:#f0f0f0;white-space:pre;will-change:transform;">(1) Cube</div>
<div style="position:absolute;left:0;top:0;width:9px;height:919px;background:#000;"></div>
<div style="position:absolute;left:1570px;top:0;width:8px;height:919px;background:#000;"></div>
<div style="position:absolute;left:0;top:911px;width:1578px;height:8px;background:#000;"></div>
<div style="position:absolute;left:0;top:0;width:1578px;height:9px;background:#000;"></div>
</body></html>
